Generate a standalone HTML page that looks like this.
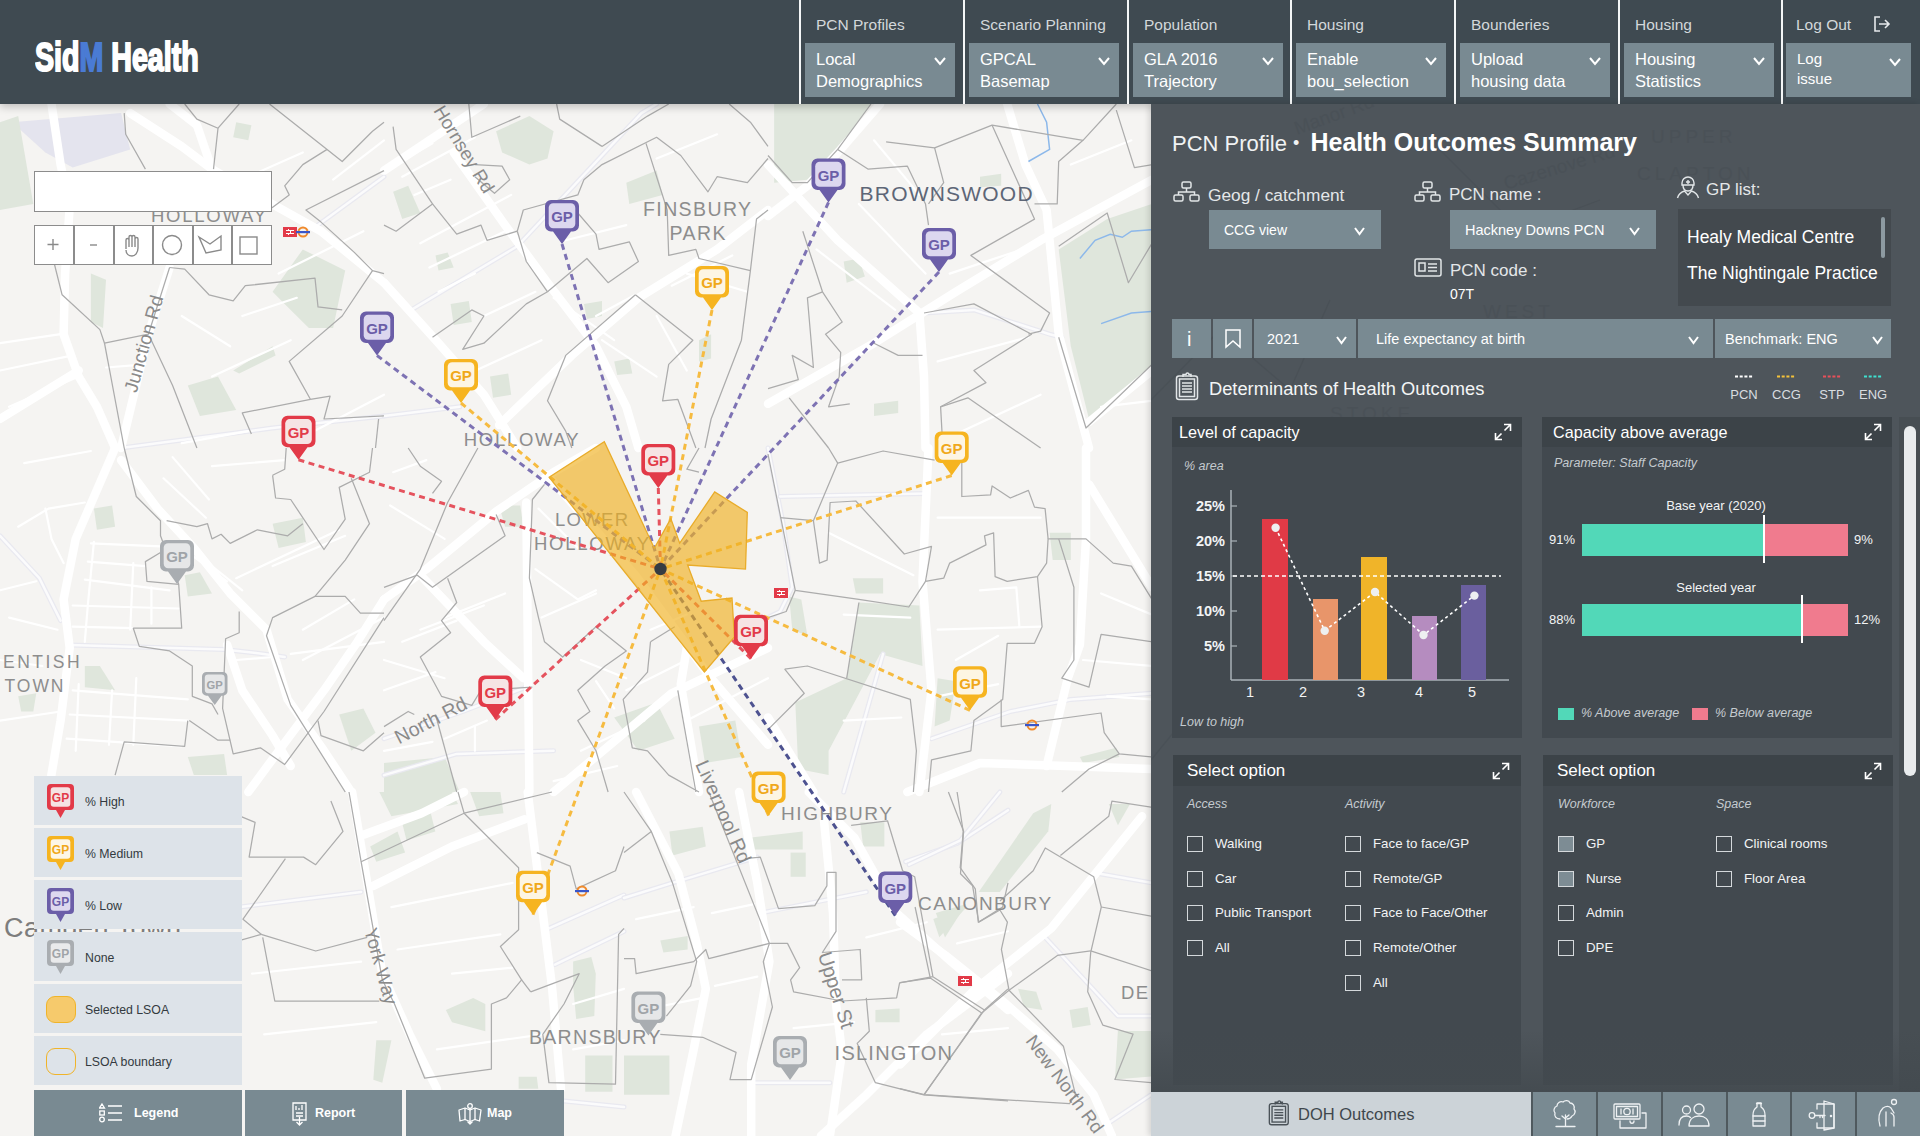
<!DOCTYPE html><html><head><meta charset="utf-8"><style>
*{margin:0;padding:0;box-sizing:border-box}
html,body{width:1920px;height:1136px;overflow:hidden;background:#f2f1ef;font-family:"Liberation Sans",sans-serif}
.a{position:absolute}
.t{position:absolute;white-space:nowrap}
#hdr{position:absolute;left:0;top:0;width:1920px;height:104px;background:#3f4a51;box-shadow:0 3px 8px rgba(0,0,0,.22)}
.logo{position:absolute;left:35px;top:37px;font-weight:bold;font-size:40px;line-height:40px;color:#fff;transform:scaleX(.715);transform-origin:0 0;white-space:nowrap;-webkit-text-stroke:2px #fff;letter-spacing:0px}
.logo span{color:#4a7bd4;-webkit-text-stroke:2px #4a7bd4}
.sep{position:absolute;top:0;width:2px;height:104px;background:#f4f6f7}
.nl{position:absolute;top:15px;font-size:15.5px;line-height:19px;color:#d3d8db;white-space:nowrap}
.dd{position:absolute;top:43px;height:54px;width:150px;background:#798a92;color:#fff;font-size:16.5px;line-height:22px;padding:5px 0 0 11px;white-space:nowrap}
#panel{position:absolute;left:1151px;top:104px;width:769px;height:1032px;background:#4e555b;box-shadow:-2px 0 6px rgba(0,0,0,.15)}
.box{position:absolute;background:#798a92}
.card{position:absolute;background:#42494f}
.ch{position:absolute;left:0;top:0;right:0;height:30px;background:#3c4348}
.cb{position:absolute;width:16px;height:16px;border:1.5px solid #d5d9dc}
.cl{position:absolute;font-size:13.3px;line-height:16px;color:#f2f4f5;white-space:nowrap}
.leg{position:absolute;left:34px;width:208px;height:49px;background:#dde3e9}
.legt{position:absolute;left:85px;font-size:12.3px;line-height:15px;color:#333a40;white-space:nowrap}
.btn{position:absolute;top:1090px;height:46px;background:#798a92}
</style></head><body>
<svg class="a" style="left:0;top:0" width="1151" height="1136" viewBox="0 0 1151 1136">
<rect width="1151" height="1136" fill="#f5f4f2"/>
<polygon points="12.1,122.2 121.1,113.1 130.2,149.4 72.7,167.6 45.4,152.5" fill="#e4e4ee"/>
<polygon points="0.0,122.2 18.2,116.1 33.3,203.9 0.0,210.0" fill="#dfe6dc"/>
<polygon points="272.6,291.8 302.8,249.4 345.2,270.6 333.1,328.1 308.9,328.1 284.7,303.9" fill="#dfe6dc"/>
<polygon points="187.8,385.6 218.0,376.6 236.2,409.9 199.9,415.9" fill="#dfe6dc"/>
<polygon points="233.2,370.5 272.6,346.3 275.6,355.4 239.2,373.5" fill="#dfe6dc"/>
<polygon points="90.9,273.6 106.0,279.7 103.0,328.1 90.9,322.0" fill="#dfe6dc"/>
<polygon points="236.2,122.2 251.4,125.2 248.3,140.3 233.2,137.3" fill="#dfe6dc"/>
<polygon points="496.1,131.3 529.4,116.1 553.6,131.3 547.5,158.5 529.4,164.6 502.1,152.5" fill="#dfe6dc"/>
<polygon points="393.1,191.8 408.2,185.8 420.3,213.0 402.2,219.1" fill="#dfe6dc"/>
<polygon points="435.5,255.4 447.6,252.4 453.7,267.5 438.5,270.6" fill="#dfe6dc"/>
<polygon points="450.6,303.9 468.8,300.9 471.8,322.0 453.7,325.1" fill="#dfe6dc"/>
<polygon points="490.0,376.6 508.2,373.5 511.2,394.7 493.0,397.8" fill="#dfe6dc"/>
<polygon points="583.9,303.9 602.0,300.9 602.0,316.0 586.9,319.0" fill="#dfe6dc"/>
<polygon points="614.2,361.4 629.3,358.4 632.3,373.5 617.2,375.0" fill="#dfe6dc"/>
<polygon points="626.3,182.7 656.6,170.6 662.6,194.9 629.3,203.9" fill="#dfe6dc"/>
<polygon points="699.0,340.2 711.1,334.2 711.1,358.4 699.0,361.4" fill="#dfe6dc"/>
<polygon points="774.1,104.0 871.0,104.0 837.7,149.4 807.4,179.7 774.1,182.7" fill="#dfe6dc"/>
<polygon points="1058.7,249.4 1107.2,219.1 1152.0,203.9 1152.0,367.5 1089.0,419.0 1070.8,346.3" fill="#dfe6dc"/>
<polygon points="980.0,176.7 1001.2,173.7 1001.2,185.8 980.0,187.3" fill="#dfe6dc"/>
<polygon points="843.7,261.5 858.9,258.5 864.9,276.6 846.7,282.7" fill="#dfe6dc"/>
<polygon points="874.0,403.8 898.2,400.8 898.2,412.9 874.0,415.9" fill="#dfe6dc"/>
<polygon points="184.7,575.2 199.9,572.2 212.0,593.4 187.8,596.4" fill="#dfe6dc"/>
<polygon points="93.9,508.6 112.1,505.5 115.1,526.7 96.9,529.8" fill="#dfe6dc"/>
<polygon points="84.8,666.0 99.9,666.0 115.1,690.3 84.8,687.2" fill="#dfe6dc"/>
<polygon points="272.6,523.7 302.8,517.7 305.9,541.9 278.6,547.9" fill="#dfe6dc"/>
<polygon points="339.2,714.5 363.4,708.4 375.5,732.7 351.3,750.8" fill="#dfe6dc"/>
<polygon points="187.8,756.9 224.1,753.9 227.1,775.1 193.8,775.1" fill="#dfe6dc"/>
<polygon points="18.2,696.3 36.3,693.3 33.3,711.5 21.2,711.5" fill="#dfe6dc"/>
<polygon points="614.2,717.5 656.6,702.4 674.7,738.7 638.4,750.8" fill="#dfe6dc"/>
<polygon points="699.0,726.6 735.3,720.6 741.4,756.9 705.0,763.0" fill="#dfe6dc"/>
<polygon points="384.0,763.0 444.6,756.9 459.7,792.0 384.0,792.0" fill="#dfe6dc"/>
<polygon points="499.1,505.5 520.3,505.5 523.3,526.7 505.1,526.7" fill="#dfe6dc"/>
<polygon points="795.3,702.4 846.7,678.2 858.9,602.5 919.4,605.5 922.5,666.0 880.1,653.9 828.6,750.8 828.6,775.1 798.3,769.0" fill="#dfe6dc"/>
<polygon points="789.2,596.4 801.3,599.4 807.4,635.8 792.2,629.7" fill="#dfe6dc"/>
<polygon points="937.6,678.2 955.8,681.2 949.7,720.6 934.6,726.6" fill="#dfe6dc"/>
<polygon points="852.8,578.2 883.1,578.2 883.1,593.4 855.8,593.4" fill="#dfe6dc"/>
<polygon points="1049.6,532.8 1070.8,532.8 1070.8,560.1 1052.7,560.1" fill="#dfe6dc"/>
<polygon points="1079.9,756.9 1116.3,747.8 1119.3,756.9 1083.0,763.0" fill="#dfe6dc"/>
<polygon points="370.2,846.5 397.5,831.4 405.1,852.6 376.3,861.7" fill="#dfe6dc"/>
<polygon points="402.0,822.3 430.8,813.2 435.3,831.4 406.6,840.5" fill="#dfe6dc"/>
<polygon points="379.3,792.0 452.0,792.0 458.0,804.1 391.4,816.2" fill="#dfe6dc"/>
<polygon points="470.2,792.0 500.4,792.0 503.5,813.2 479.2,816.2" fill="#dfe6dc"/>
<polygon points="445.9,1010.0 473.2,997.9 485.3,1004.0 485.3,1031.2 452.0,1022.2" fill="#dfe6dc"/>
<polygon points="573.1,961.6 591.3,957.1 595.8,973.7 594.3,1016.1 576.2,1019.1 573.1,985.8" fill="#dfe6dc"/>
<polygon points="585.2,1055.5 612.5,1055.5 612.5,1091.8 585.2,1091.8" fill="#dfe6dc"/>
<polygon points="518.6,1076.7 536.8,1076.7 538.3,1088.8 518.6,1088.8" fill="#dfe6dc"/>
<polygon points="376.3,1040.3 391.4,1040.3 382.3,1082.7 373.3,1079.7" fill="#dfe6dc"/>
<polygon points="669.4,831.4 702.7,826.8 705.8,846.5 672.5,855.6" fill="#dfe6dc"/>
<polygon points="751.2,837.4 802.7,831.4 802.7,849.5 754.2,849.5" fill="#dfe6dc"/>
<polygon points="660.3,940.4 687.6,935.9 687.6,949.5 663.4,952.5" fill="#dfe6dc"/>
<polygon points="624.0,1055.5 669.4,1055.5 669.4,1094.8 624.0,1094.8" fill="#dfe6dc"/>
<polygon points="875.4,1010.0 899.6,1008.5 899.6,1022.2 875.4,1022.2" fill="#dfe6dc"/>
<polygon points="860.2,822.3 884.4,822.3 884.4,846.5 863.2,846.5" fill="#dfe6dc"/>
<polygon points="935.9,913.1 966.2,904.1 945.0,937.4" fill="#dfe6dc"/>
<polygon points="790.6,852.6 805.7,852.6 805.7,876.8 790.6,876.8" fill="#dfe6dc"/>
<polygon points="978.7,891.9 1033.2,813.2 1051.3,804.1 1048.3,831.3 999.9,891.9" fill="#dfe6dc"/>
<polygon points="1018.0,988.7 1036.2,991.8 1042.3,1009.9 1024.1,1006.9" fill="#dfe6dc"/>
<polygon points="1069.5,1009.9 1087.7,1006.9 1090.7,1025.1 1072.5,1028.1" fill="#dfe6dc"/>
<polygon points="1117.9,1031.1 1151.2,1031.1 1151.2,1076.5 1114.9,1079.5" fill="#dfe6dc"/>
<polygon points="1108.8,804.1 1130.0,804.1 1117.9,825.3" fill="#dfe6dc"/>
<polygon points="933.3,919.1 966.6,907.0 939.3,937.3" fill="#dfe6dc"/>
<g fill="none" stroke-linecap="round" stroke-linejoin="round">
<polyline points="121.1,448.0 272.6,428.0 384.0,415.9" stroke="#e9e9f0" stroke-width="5"/>
<polyline points="121.1,448.0 272.6,428.0 384.0,415.9" stroke="#fbfbfc" stroke-width="2.5"/>
<polyline points="318.0,225.1 384.0,176.7" stroke="#e9e9f0" stroke-width="5"/>
<polyline points="318.0,225.1 384.0,176.7" stroke="#fbfbfc" stroke-width="2.5"/>
<polyline points="411.3,309.9 517.3,246.3 602.0,155.5 641.4,113.1 656.6,104.0" stroke="#e9e9f0" stroke-width="5"/>
<polyline points="411.3,309.9 517.3,246.3 602.0,155.5 641.4,113.1 656.6,104.0" stroke="#fbfbfc" stroke-width="2.5"/>
<polyline points="384.0,415.9 459.7,406.8" stroke="#e9e9f0" stroke-width="5"/>
<polyline points="384.0,415.9 459.7,406.8" stroke="#fbfbfc" stroke-width="2.5"/>
<polyline points="924.0,313.0 973.9,309.9 1049.6,334.2 1061.8,337.2" stroke="#e9e9f0" stroke-width="5"/>
<polyline points="924.0,313.0 973.9,309.9 1049.6,334.2 1061.8,337.2" stroke="#fbfbfc" stroke-width="2.5"/>
<polyline points="69.7,644.9 224.1,649.4 263.5,653.9 284.7,657.0" stroke="#e9e9f0" stroke-width="5"/>
<polyline points="69.7,644.9 224.1,649.4 263.5,653.9 284.7,657.0" stroke="#fbfbfc" stroke-width="2.5"/>
<polyline points="0.0,535.8 39.4,578.2 60.6,620.6" stroke="#e9e9f0" stroke-width="5"/>
<polyline points="0.0,535.8 39.4,578.2 60.6,620.6" stroke="#fbfbfc" stroke-width="2.5"/>
<polyline points="384.0,738.7 462.7,711.5 526.3,687.2" stroke="#e9e9f0" stroke-width="5"/>
<polyline points="384.0,738.7 462.7,711.5 526.3,687.2" stroke="#fbfbfc" stroke-width="2.5"/>
<polyline points="384.0,775.1 456.7,753.9 553.6,750.8" stroke="#e9e9f0" stroke-width="5"/>
<polyline points="384.0,775.1 456.7,753.9 553.6,750.8" stroke="#fbfbfc" stroke-width="2.5"/>
<polyline points="768.0,448.0 783.1,523.7 792.2,587.3 780.1,611.5 768.0,617.6" stroke="#e9e9f0" stroke-width="5"/>
<polyline points="768.0,448.0 783.1,523.7 792.2,587.3 780.1,611.5 768.0,617.6" stroke="#fbfbfc" stroke-width="2.5"/>
<polyline points="931.5,738.7 1010.3,711.5 1070.8,699.4 1152.0,693.3" stroke="#e9e9f0" stroke-width="5"/>
<polyline points="931.5,738.7 1010.3,711.5 1070.8,699.4 1152.0,693.3" stroke="#fbfbfc" stroke-width="2.5"/>
<polyline points="780.1,496.5 925.5,493.4" stroke="#e9e9f0" stroke-width="5"/>
<polyline points="780.1,496.5 925.5,493.4" stroke="#fbfbfc" stroke-width="2.5"/>
<polyline points="883.1,653.9 843.7,792.0" stroke="#e9e9f0" stroke-width="5"/>
<polyline points="883.1,653.9 843.7,792.0" stroke="#fbfbfc" stroke-width="2.5"/>
<polyline points="240.0,907.1 361.1,891.9" stroke="#e9e9f0" stroke-width="5"/>
<polyline points="240.0,907.1 361.1,891.9" stroke="#fbfbfc" stroke-width="2.5"/>
<polyline points="548.9,928.3 624.0,895.0" stroke="#e9e9f0" stroke-width="5"/>
<polyline points="548.9,928.3 624.0,895.0" stroke="#fbfbfc" stroke-width="2.5"/>
<polyline points="555.0,964.6 624.0,931.3" stroke="#e9e9f0" stroke-width="5"/>
<polyline points="555.0,964.6 624.0,931.3" stroke="#fbfbfc" stroke-width="2.5"/>
<polyline points="564.0,1100.9 624.0,1107.0" stroke="#e9e9f0" stroke-width="5"/>
<polyline points="564.0,1100.9 624.0,1107.0" stroke="#fbfbfc" stroke-width="2.5"/>
<polyline points="624.0,898.0 672.5,882.9 757.3,857.1" stroke="#e9e9f0" stroke-width="5"/>
<polyline points="624.0,898.0 672.5,882.9 757.3,857.1" stroke="#fbfbfc" stroke-width="2.5"/>
<polyline points="760.3,913.1 866.3,891.9" stroke="#e9e9f0" stroke-width="5"/>
<polyline points="760.3,913.1 866.3,891.9" stroke="#fbfbfc" stroke-width="2.5"/>
<polyline points="905.6,861.7 957.1,843.5 1008.0,810.2" stroke="#e9e9f0" stroke-width="5"/>
<polyline points="905.6,861.7 957.1,843.5 1008.0,810.2" stroke="#fbfbfc" stroke-width="2.5"/>
<polyline points="751.2,1082.7 829.9,1082.7" stroke="#e9e9f0" stroke-width="5"/>
<polyline points="751.2,1082.7 829.9,1082.7" stroke="#fbfbfc" stroke-width="2.5"/>
<polyline points="1042.3,934.3 1117.9,1016.0 1151.2,1016.0" stroke="#e9e9f0" stroke-width="5"/>
<polyline points="1042.3,934.3 1117.9,1016.0 1151.2,1016.0" stroke="#fbfbfc" stroke-width="2.5"/>
<polyline points="1099.8,873.7 1151.2,882.8" stroke="#e9e9f0" stroke-width="5"/>
<polyline points="1099.8,873.7 1151.2,882.8" stroke="#fbfbfc" stroke-width="2.5"/>
<polyline points="909.1,864.6 960.5,840.4 999.9,792.0" stroke="#e9e9f0" stroke-width="5"/>
<polyline points="909.1,864.6 960.5,840.4 999.9,792.0" stroke="#fbfbfc" stroke-width="2.5"/>
<polyline points="1105.8,1124.9 1151.2,1094.7" stroke="#e9e9f0" stroke-width="5"/>
<polyline points="1105.8,1124.9 1151.2,1094.7" stroke="#fbfbfc" stroke-width="2.5"/>
<polyline points="90.9,543.4 160.5,546.4" stroke="#fff" stroke-width="2.2"/>
<polyline points="87.8,561.6 145.4,566.1" stroke="#fff" stroke-width="2.2"/>
<polyline points="84.8,579.7 169.6,590.3" stroke="#fff" stroke-width="2.2"/>
<polyline points="72.7,605.5 178.7,608.5" stroke="#fff" stroke-width="2.2"/>
<polyline points="72.7,626.7 133.3,628.2" stroke="#fff" stroke-width="2.2"/>
<polyline points="93.9,541.9 87.8,605.5 84.8,641.8" stroke="#fff" stroke-width="2.2"/>
<polyline points="133.3,563.1 130.2,629.7" stroke="#fff" stroke-width="2.2"/>
<polyline points="151.4,587.3 151.4,623.7" stroke="#fff" stroke-width="2.2"/>
<polyline points="212.0,466.2 284.7,460.1" stroke="#fff" stroke-width="2.2"/>
<polyline points="172.6,457.1 209.0,499.5" stroke="#fff" stroke-width="2.2"/>
<polyline points="163.5,478.3 205.9,517.7" stroke="#fff" stroke-width="2.2"/>
<polyline points="24.2,463.1 90.9,451.0" stroke="#fff" stroke-width="2.2"/>
<polyline points="18.2,526.7 48.5,508.6 84.8,502.5" stroke="#fff" stroke-width="2.2"/>
<polyline points="45.4,508.6 51.5,538.9 63.6,563.1" stroke="#fff" stroke-width="2.2"/>
<polyline points="181.7,547.9 227.1,581.3" stroke="#fff" stroke-width="2.2"/>
<polyline points="196.9,554.0 242.3,590.3" stroke="#fff" stroke-width="2.2"/>
<polyline points="236.2,578.2 339.2,529.8" stroke="#fff" stroke-width="2.2"/>
<polyline points="272.6,566.1 345.2,535.8" stroke="#fff" stroke-width="2.2"/>
<polyline points="302.8,629.7 354.3,599.4" stroke="#fff" stroke-width="2.2"/>
<polyline points="302.8,660.0 384.0,617.6" stroke="#fff" stroke-width="2.2"/>
<polyline points="72.7,690.3 187.8,699.4" stroke="#fff" stroke-width="2.2"/>
<polyline points="69.7,714.5 187.8,720.6" stroke="#fff" stroke-width="2.2"/>
<polyline points="66.6,738.7 181.7,746.3" stroke="#fff" stroke-width="2.2"/>
<polyline points="78.7,684.2 75.7,750.8" stroke="#fff" stroke-width="2.2"/>
<polyline points="112.1,690.3 109.0,744.8" stroke="#fff" stroke-width="2.2"/>
<polyline points="136.3,678.2 133.3,744.8" stroke="#fff" stroke-width="2.2"/>
<polyline points="0.0,720.6 60.6,711.5" stroke="#fff" stroke-width="2.2"/>
<polyline points="290.7,653.9 384.0,641.8" stroke="#fff" stroke-width="2.2"/>
<polyline points="236.2,660.0 272.6,657.0" stroke="#fff" stroke-width="2.2"/>
<polyline points="0.0,590.3 36.3,581.3" stroke="#fff" stroke-width="2.2"/>
<polyline points="9.1,617.6 57.5,629.7" stroke="#fff" stroke-width="2.2"/>
<polyline points="0.0,660.0 42.4,666.0" stroke="#fff" stroke-width="2.2"/>
<polyline points="393.1,472.2 426.4,460.1" stroke="#fff" stroke-width="2.2"/>
<polyline points="390.1,505.5 444.6,538.9" stroke="#fff" stroke-width="2.2"/>
<polyline points="538.5,508.6 577.8,547.9" stroke="#fff" stroke-width="2.2"/>
<polyline points="535.4,569.1 577.8,599.4 596.0,590.3" stroke="#fff" stroke-width="2.2"/>
<polyline points="541.5,617.6 596.0,593.4" stroke="#fff" stroke-width="2.2"/>
<polyline points="444.6,617.6 505.1,593.4" stroke="#fff" stroke-width="2.2"/>
<polyline points="420.3,629.7 483.9,605.5" stroke="#fff" stroke-width="2.2"/>
<polyline points="402.2,641.8 456.7,620.6" stroke="#fff" stroke-width="2.2"/>
<polyline points="384.0,660.0 444.6,678.2" stroke="#fff" stroke-width="2.2"/>
<polyline points="384.0,690.3 435.5,672.1" stroke="#fff" stroke-width="2.2"/>
<polyline points="444.6,738.7 487.0,720.6" stroke="#fff" stroke-width="2.2"/>
<polyline points="474.9,726.6 474.9,750.8" stroke="#fff" stroke-width="2.2"/>
<polyline points="580.9,660.0 626.3,678.2" stroke="#fff" stroke-width="2.2"/>
<polyline points="596.0,681.2 614.2,708.4" stroke="#fff" stroke-width="2.2"/>
<polyline points="626.3,690.3 686.8,660.0" stroke="#fff" stroke-width="2.2"/>
<polyline points="650.5,629.7 686.8,614.6" stroke="#fff" stroke-width="2.2"/>
<polyline points="686.8,720.6 768.0,678.2" stroke="#fff" stroke-width="2.2"/>
<polyline points="580.9,750.8 644.4,720.6" stroke="#fff" stroke-width="2.2"/>
<polyline points="384.0,750.8 432.5,741.8" stroke="#fff" stroke-width="2.2"/>
<polyline points="553.6,781.1 617.2,766.0" stroke="#fff" stroke-width="2.2"/>
<polyline points="396.1,164.6 432.5,143.4" stroke="#fff" stroke-width="2.2"/>
<polyline points="402.2,176.7 474.9,137.3" stroke="#fff" stroke-width="2.2"/>
<polyline points="414.3,194.9 450.6,179.7" stroke="#fff" stroke-width="2.2"/>
<polyline points="420.3,243.3 511.2,194.9" stroke="#fff" stroke-width="2.2"/>
<polyline points="429.4,267.5 505.1,231.2" stroke="#fff" stroke-width="2.2"/>
<polyline points="438.5,291.8 474.9,273.6" stroke="#fff" stroke-width="2.2"/>
<polyline points="462.7,376.6 541.5,340.2" stroke="#fff" stroke-width="2.2"/>
<polyline points="483.9,316.0 535.4,291.8" stroke="#fff" stroke-width="2.2"/>
<polyline points="553.6,297.8 614.2,340.2" stroke="#fff" stroke-width="2.2"/>
<polyline points="565.7,240.3 626.3,225.1" stroke="#fff" stroke-width="2.2"/>
<polyline points="596.0,316.0 635.4,294.8" stroke="#fff" stroke-width="2.2"/>
<polyline points="602.0,340.2 656.6,376.6" stroke="#fff" stroke-width="2.2"/>
<polyline points="656.6,158.5 717.1,134.3" stroke="#fff" stroke-width="2.2"/>
<polyline points="671.7,285.7 732.3,255.4" stroke="#fff" stroke-width="2.2"/>
<polyline points="656.6,316.0 686.8,370.5" stroke="#fff" stroke-width="2.2"/>
<polyline points="686.8,273.6 747.4,291.8" stroke="#fff" stroke-width="2.2"/>
<polyline points="828.6,532.8 913.4,575.2" stroke="#fff" stroke-width="2.2"/>
<polyline points="843.7,614.6 910.3,617.6" stroke="#fff" stroke-width="2.2"/>
<polyline points="937.6,517.7 1040.6,517.7" stroke="#fff" stroke-width="2.2"/>
<polyline points="937.6,629.7 1040.6,626.7" stroke="#fff" stroke-width="2.2"/>
<polyline points="980.0,590.3 1016.3,587.3 1019.4,626.7" stroke="#fff" stroke-width="2.2"/>
<polyline points="955.8,660.0 998.2,635.8" stroke="#fff" stroke-width="2.2"/>
<polyline points="1101.1,593.4 1152.0,614.6" stroke="#fff" stroke-width="2.2"/>
<polyline points="1083.0,660.0 1152.0,666.0" stroke="#fff" stroke-width="2.2"/>
<polyline points="937.6,696.3 998.2,684.2" stroke="#fff" stroke-width="2.2"/>
<polyline points="843.7,720.6 901.3,717.5" stroke="#fff" stroke-width="2.2"/>
<polyline points="1107.2,696.3 1152.0,699.4" stroke="#fff" stroke-width="2.2"/>
<polyline points="0.0,343.2 60.6,334.2" stroke="#fff" stroke-width="2.2"/>
<polyline points="0.0,370.5 72.7,355.4" stroke="#fff" stroke-width="2.2"/>
<polyline points="9.1,406.8 78.7,376.6" stroke="#fff" stroke-width="2.2"/>
<polyline points="181.7,316.0 230.2,346.3" stroke="#fff" stroke-width="2.2"/>
<polyline points="242.3,316.0 296.8,297.8" stroke="#fff" stroke-width="2.2"/>
<polyline points="302.8,437.1 384.0,394.7" stroke="#fff" stroke-width="2.2"/>
<polyline points="212.0,376.6 290.7,340.2" stroke="#fff" stroke-width="2.2"/>
<polyline points="278.6,273.6 363.4,231.2" stroke="#fff" stroke-width="2.2"/>
<polyline points="248.3,176.7 302.8,152.5" stroke="#fff" stroke-width="2.2"/>
<polyline points="333.1,179.7 384.0,140.3" stroke="#fff" stroke-width="2.2"/>
<polyline points="106.0,367.5 145.4,364.4" stroke="#fff" stroke-width="2.2"/>
<polyline points="181.7,443.2 248.3,431.1" stroke="#fff" stroke-width="2.2"/>
<polyline points="858.9,203.9 925.5,273.6" stroke="#fff" stroke-width="2.2"/>
<polyline points="816.5,249.4 895.2,309.9" stroke="#fff" stroke-width="2.2"/>
<polyline points="949.7,273.6 1040.6,243.3" stroke="#fff" stroke-width="2.2"/>
<polyline points="937.6,361.4 1028.4,337.2" stroke="#fff" stroke-width="2.2"/>
<polyline points="949.7,437.1 1040.6,394.7" stroke="#fff" stroke-width="2.2"/>
<polyline points="874.0,140.3 919.4,194.9" stroke="#fff" stroke-width="2.2"/>
<polyline points="1070.8,164.6 1131.4,140.3" stroke="#fff" stroke-width="2.2"/>
<polyline points="1101.1,406.8 1152.0,400.8" stroke="#fff" stroke-width="2.2"/>
<polyline points="252.1,973.7 361.1,961.6" stroke="#fff" stroke-width="2.2"/>
<polyline points="264.2,1034.3 376.3,1022.2" stroke="#fff" stroke-width="2.2"/>
<polyline points="391.4,907.1 512.6,882.9" stroke="#fff" stroke-width="2.2"/>
<polyline points="397.5,949.5 500.4,934.3" stroke="#fff" stroke-width="2.2"/>
<polyline points="452.0,973.7 512.6,967.7" stroke="#fff" stroke-width="2.2"/>
<polyline points="436.9,1049.4 542.8,1034.3" stroke="#fff" stroke-width="2.2"/>
<polyline points="573.1,1004.0 624.0,988.9" stroke="#fff" stroke-width="2.2"/>
<polyline points="573.1,1049.4 624.0,1040.3" stroke="#fff" stroke-width="2.2"/>
<polyline points="636.1,919.2 693.7,907.1" stroke="#fff" stroke-width="2.2"/>
<polyline points="642.2,1010.0 702.7,997.9" stroke="#fff" stroke-width="2.2"/>
<polyline points="711.8,913.1 754.2,904.1" stroke="#fff" stroke-width="2.2"/>
<polyline points="714.9,985.8 757.3,976.7" stroke="#fff" stroke-width="2.2"/>
<polyline points="793.6,1028.2 854.2,1022.2" stroke="#fff" stroke-width="2.2"/>
<polyline points="866.3,937.4 926.8,922.2" stroke="#fff" stroke-width="2.2"/>
<polyline points="881.4,1049.4 926.8,1046.4" stroke="#fff" stroke-width="2.2"/>
<polyline points="957.1,943.4 1008.0,931.3" stroke="#fff" stroke-width="2.2"/>
<polyline points="942.0,1034.3 1008.0,1028.2" stroke="#fff" stroke-width="2.2"/>
<polyline points="130.2,113.1 181.7,146.4 212.0,169.1 266.5,200.9 321.0,231.2 384.0,282.7" stroke="#fff" stroke-width="8.5"/>
<polyline points="169.6,104.0 196.9,125.2 212.0,169.1" stroke="#fff" stroke-width="8.5"/>
<polyline points="169.6,267.5 148.4,334.2 121.1,448.0" stroke="#fff" stroke-width="8.5"/>
<polyline points="51.5,104.0 60.6,164.6 69.7,207.0 65.1,273.6 63.6,334.2 78.7,376.6 96.9,406.8 115.1,448.0" stroke="#fff" stroke-width="8.5"/>
<polyline points="0.0,419.0 78.7,370.5" stroke="#fff" stroke-width="8.5"/>
<polyline points="384.0,282.7 438.5,343.2 483.9,394.7 517.3,448.0" stroke="#fff" stroke-width="8.5"/>
<polyline points="453.7,152.5 505.1,225.1 547.5,282.7 596.0,346.3 626.3,406.8 638.4,448.0" stroke="#fff" stroke-width="8.5"/>
<polyline points="384.0,170.6 438.5,134.3 483.9,104.0" stroke="#fff" stroke-width="8.5"/>
<polyline points="499.1,425.0 571.8,355.4 638.4,297.8 717.1,249.4 768.0,210.0" stroke="#fff" stroke-width="8.5"/>
<polyline points="768.0,164.6 837.7,240.3 919.4,313.0 924.0,376.6 925.5,448.0" stroke="#fff" stroke-width="8.5"/>
<polyline points="768.0,216.1 807.4,185.8 840.7,149.4 880.1,104.0" stroke="#fff" stroke-width="8.5"/>
<polyline points="1007.2,104.0 1025.4,164.6 1046.6,210.0 1058.7,334.2 1089.0,448.0" stroke="#fff" stroke-width="8.5"/>
<polyline points="768.0,403.8 874.0,343.2 955.8,291.8 1040.6,240.3 1152.0,179.7" stroke="#fff" stroke-width="8.5"/>
<polyline points="1089.0,422.0 1152.0,370.5" stroke="#fff" stroke-width="8.5"/>
<polyline points="115.1,448.0 75.7,538.9 63.6,599.4 69.7,647.9 60.6,720.6 48.5,792.0" stroke="#fff" stroke-width="8.5"/>
<polyline points="121.1,460.1 157.5,508.6 193.8,547.9 230.2,593.4 266.5,629.7 287.7,699.4 324.0,750.8 351.3,792.0" stroke="#fff" stroke-width="8.5"/>
<polyline points="227.1,644.9 242.3,690.3 272.6,735.7 290.7,766.0" stroke="#fff" stroke-width="8.5"/>
<polyline points="384.0,599.4 357.4,641.8 324.0,690.3 287.7,738.7 248.3,792.0" stroke="#fff" stroke-width="8.5"/>
<polyline points="384.0,599.4 426.4,569.1 496.1,511.6 553.6,472.2 596.0,448.0" stroke="#fff" stroke-width="8.5"/>
<polyline points="423.4,578.2 483.9,641.8 523.3,678.2" stroke="#fff" stroke-width="8.5"/>
<polyline points="526.3,502.5 529.4,792.0" stroke="#fff" stroke-width="8.5"/>
<polyline points="547.5,475.3 635.4,575.2 711.1,678.2 768.0,744.8" stroke="#fff" stroke-width="8.5"/>
<polyline points="686.8,647.9 680.8,684.2 699.0,792.0" stroke="#fff" stroke-width="8.5"/>
<polyline points="553.6,792.0 671.7,693.3 768.0,647.9" stroke="#fff" stroke-width="8.5"/>
<polyline points="928.5,448.0 922.5,581.3 931.5,690.3 919.4,792.0" stroke="#fff" stroke-width="8.5"/>
<polyline points="1086.0,448.0 1086.0,538.9 1079.9,644.9 1067.8,678.2 1046.6,766.0" stroke="#fff" stroke-width="8.5"/>
<polyline points="1089.0,484.3 1152.0,587.3" stroke="#fff" stroke-width="8.5"/>
<polyline points="907.3,792.0 980.0,763.0 1152.0,769.0" stroke="#fff" stroke-width="8.5"/>
<polyline points="768.0,717.5 813.4,792.0" stroke="#fff" stroke-width="8.5"/>
<polyline points="352.1,792.0 367.2,882.9 382.3,973.7 409.6,1034.3 436.9,1088.8" stroke="#fff" stroke-width="8.5"/>
<polyline points="527.7,792.0 542.8,913.1 551.9,985.8 561.0,1088.8" stroke="#fff" stroke-width="8.5"/>
<polyline points="364.2,834.4 421.7,813.2 464.1,792.0" stroke="#fff" stroke-width="8.5"/>
<polyline points="373.3,885.9 452.0,846.5 524.7,819.3" stroke="#fff" stroke-width="8.5"/>
<polyline points="636.1,792.0 678.5,873.8 696.7,943.4 705.8,988.9 693.7,1049.4 675.5,1136.0" stroke="#fff" stroke-width="8.5"/>
<polyline points="739.1,792.0 757.3,882.9 769.4,961.6 751.2,1064.6 751.2,1136.0" stroke="#fff" stroke-width="8.5"/>
<polyline points="823.9,819.3 833.0,913.1 836.0,1004.0 842.0,1052.4 829.9,1136.0" stroke="#fff" stroke-width="8.5"/>
<polyline points="808.7,792.0 854.2,837.4 896.6,913.1 951.1,961.6 1008.0,1010.0" stroke="#fff" stroke-width="8.5"/>
<polyline points="1008.0,973.7 926.8,1034.3 866.3,1094.8 820.9,1136.0" stroke="#fff" stroke-width="8.5"/>
<polyline points="900.0,922.1 945.4,955.4 1005.9,1003.9 1057.4,1049.3 1093.7,1094.7 1111.9,1135.8" stroke="#fff" stroke-width="8.5"/>
<polyline points="900.0,1064.4 975.7,988.7 1051.3,928.2 1142.1,816.2" stroke="#fff" stroke-width="8.5"/>
</g>
<g fill="none" stroke="#8cb8ea" stroke-width="1.5">
<polyline points="1037.5,104.0 1046.6,122.2 1049.6,149.4 1028.4,161.5"/>
<polyline points="1079.9,258.5 1095.1,240.3 1110.2,234.2 1122.3,237.3 1131.4,231.2 1152.0,229.7"/>
<polyline points="1101.1,323.6 1131.4,313.0 1152.0,311.5"/>
</g>
<g fill="none" stroke="#acacac" stroke-width="1.25" stroke-linejoin="round">
<polyline points="124.2,113.1 125.7,134.3 145.4,169.1"/>
<polyline points="184.7,104.0 196.9,119.1 218.0,128.2 213.5,169.1"/>
<polyline points="218.0,128.2 239.2,104.0"/>
<polyline points="269.5,104.0 327.1,149.4 302.8,164.6 284.7,185.8 289.2,194.9 271.0,208.5"/>
<polyline points="327.1,149.4 342.2,161.5 372.5,131.3 384.0,122.2"/>
<polyline points="384.0,170.6 305.9,210.0 321.0,222.1 354.3,252.4 372.5,270.6 384.0,273.6"/>
<polyline points="169.6,267.5 184.7,269.1 209.0,294.8 233.2,300.9 245.3,285.7 315.0,278.1 318.0,306.9 342.2,309.9"/>
<polyline points="54.5,264.5 62.1,294.8 99.9,329.6 104.5,343.2 148.4,334.2 169.6,267.5"/>
<polyline points="104.5,343.2 124.2,448.0"/>
<polyline points="149.9,337.2 172.6,385.6 196.9,448.0"/>
<polyline points="372.5,270.6 342.2,316.0 289.2,361.4 310.4,399.3 242.3,412.9 251.4,434.1"/>
<polyline points="310.4,399.3 330.1,396.2 324.0,419.0 384.0,415.9"/>
<polyline points="378.6,419.0 375.5,448.0"/>
<polyline points="393.1,126.7 396.1,149.4 432.5,203.9 396.1,231.2 384.0,225.1"/>
<polyline points="432.5,203.9 456.7,234.2 480.9,225.1 487.0,240.3 517.3,231.2"/>
<polyline points="468.8,104.0 471.8,137.3 520.3,116.1"/>
<polyline points="517.3,231.2 523.3,210.0 577.8,194.9 583.9,179.7 602.0,164.6 656.6,137.3 680.8,155.5 708.0,191.8 717.1,176.7 747.4,182.7 768.0,158.5"/>
<polyline points="474.9,164.6 502.1,166.1 509.7,179.7 494.5,193.3 474.9,176.7"/>
<polyline points="556.6,104.0 559.7,119.1 602.0,146.4"/>
<polyline points="602.0,146.4 647.5,116.1 668.7,104.0"/>
<polyline points="517.3,231.2 526.3,261.5 547.5,291.8 526.3,303.9 483.9,343.2 462.7,349.3 483.9,316.0 471.8,309.9 432.5,337.2"/>
<polyline points="547.5,291.8 586.9,258.5 608.1,282.7 638.4,261.5 629.3,241.8 599.0,249.4 596.0,234.2 577.8,213.0"/>
<polyline points="646.0,143.4 667.2,210.0 668.7,255.4 695.9,249.4 699.0,258.5 750.4,270.6"/>
<polyline points="635.4,294.8 692.9,340.2 668.7,364.4 662.6,400.8 677.8,399.3 695.9,448.0"/>
<polyline points="635.4,294.8 565.7,355.4 547.5,400.8 565.7,431.1 571.8,448.0"/>
<polyline points="768.0,210.0 756.5,219.1 750.4,270.6 741.4,340.2 711.1,419.0 705.0,448.0"/>
<polyline points="729.2,104.0 750.4,122.2 768.0,146.4"/>
<polyline points="768.0,155.5 792.2,182.7 807.4,182.7 837.7,149.4 871.0,104.0"/>
<polyline points="837.7,149.4 867.9,169.1 907.3,166.1 925.5,203.9 928.5,225.1"/>
<polyline points="886.1,141.9 934.6,147.9 992.1,125.2 1083.0,140.3 1116.3,104.0"/>
<polyline points="934.6,147.9 943.7,182.7 928.5,203.9"/>
<polyline points="992.1,125.2 1034.5,219.1 970.9,255.4 1049.6,313.0 1040.6,331.1 1028.4,334.2"/>
<polyline points="1083.0,140.3 1058.7,161.5 1057.2,203.9 1034.5,203.9"/>
<polyline points="1116.3,110.1 1134.4,167.6 1152.0,164.6"/>
<polyline points="1058.7,246.3 1107.2,213.0 1128.4,282.7 1152.0,243.3"/>
<polyline points="802.8,231.2 822.5,291.8 842.2,322.0 825.5,334.2 840.7,352.3 839.2,376.6 828.6,406.8 849.8,403.8"/>
<polyline points="822.5,291.8 807.4,297.8 813.4,367.5 792.2,355.4 798.3,379.6 768.0,388.7"/>
<polyline points="874.0,343.2 898.2,355.4 922.5,355.4"/>
<polyline points="924.0,313.0 973.9,303.9 1031.5,334.2 973.9,370.5 986.0,382.6 940.6,406.8 942.1,434.1"/>
<polyline points="940.6,406.8 967.9,397.8 1040.6,448.0"/>
<polyline points="789.2,397.8 828.6,448.0"/>
<polyline points="1058.7,337.2 1086.0,428.0 1152.0,364.4"/>
<polyline points="124.2,448.0 136.3,496.5 160.5,520.7 160.5,535.8 178.7,584.3 181.7,628.2 133.3,628.2 139.3,646.4 169.6,650.9 192.3,666.0 192.3,696.3 212.0,703.9 218.0,714.5"/>
<polyline points="160.5,552.5 145.4,561.6 146.9,581.3 178.7,584.3"/>
<polyline points="166.6,520.7 196.9,526.7 207.5,523.7 212.0,538.9 221.1,534.3 230.2,543.4 257.4,529.8 287.7,535.8 302.8,523.7"/>
<polyline points="272.6,475.3 284.7,469.2 286.2,448.0"/>
<polyline points="272.6,475.3 275.6,498.0 290.7,499.5 324.0,549.5 345.2,519.2 339.2,487.4 369.5,472.2 372.5,448.0"/>
<polyline points="351.3,478.3 369.5,523.7 345.2,560.1 315.0,596.4 272.6,617.6 266.5,635.8 290.7,705.4 345.2,792.0"/>
<polyline points="315.0,596.4 345.2,596.4 360.4,613.1 384.0,613.1"/>
<polyline points="239.2,611.5 239.2,632.7 225.6,638.8 222.6,708.4 233.2,753.9 260.4,747.8 284.7,764.5 324.0,711.5 384.0,617.6"/>
<polyline points="189.3,720.6 218.0,740.2 230.2,740.2"/>
<polyline points="187.8,720.6 184.7,746.3 124.2,741.8 115.1,775.1"/>
<polyline points="318.0,720.6 321.0,735.7 363.4,750.8 384.0,732.7"/>
<polyline points="408.2,448.0 420.3,466.2 441.5,481.3 432.5,493.4"/>
<polyline points="477.9,448.0 447.6,502.5 420.3,569.1 384.0,620.6"/>
<polyline points="496.1,514.6 505.1,535.8 432.5,587.3 417.3,575.2 384.0,587.3"/>
<polyline points="544.5,484.3 532.4,499.5 529.4,578.2 538.5,617.6 544.5,641.8 562.7,657.0 596.0,626.7 626.3,650.9 605.1,666.0 577.8,690.3 589.9,711.5 577.8,720.6 596.0,750.8 608.1,792.0"/>
<polyline points="447.6,578.2 456.7,602.5 441.5,620.6 450.6,632.7 420.3,657.0 441.5,696.3 471.8,705.4 480.9,690.3 532.4,687.2"/>
<polyline points="384.0,726.6 408.2,711.5 414.3,714.5"/>
<polyline points="435.5,714.5 456.7,792.0"/>
<polyline points="650.5,641.8 647.5,672.1 623.2,699.4 632.3,747.8 647.5,750.8 668.7,775.1 699.0,792.0"/>
<polyline points="650.5,641.8 674.7,626.7"/>
<polyline points="699.0,448.0 686.8,469.2 699.0,472.2"/>
<polyline points="677.8,690.3 695.9,792.0"/>
<polyline points="828.6,448.0 837.7,463.1 883.1,451.0 934.6,460.1"/>
<polyline points="837.7,463.1 813.4,520.7 819.5,563.1 827.1,560.1 830.1,502.5 855.8,501.0 904.3,554.0 931.5,546.4 925.5,581.3 943.7,578.2 949.7,563.1 986.0,544.9 984.5,535.8 993.6,532.8 995.1,576.7 1007.2,581.3 1037.5,576.7 1046.6,563.1 1048.1,538.9 1086.0,538.9 1113.2,563.1 1131.4,566.1 1152.0,599.4"/>
<polyline points="780.1,517.7 813.4,520.7"/>
<polyline points="768.0,454.1 795.3,590.3 858.9,599.4 908.8,607.0 925.5,581.3"/>
<polyline points="795.3,590.3 786.2,611.5 768.0,617.6"/>
<polyline points="961.8,457.1 961.8,496.5 990.6,494.9 992.1,485.9 1010.3,498.0 1028.4,490.4 1034.5,507.1 1045.1,508.6 1048.1,538.9"/>
<polyline points="1037.5,576.7 1042.1,626.7 1034.5,643.3 1007.2,643.3 1002.7,699.4 973.9,720.6 970.9,750.8 931.5,759.9 928.5,792.0"/>
<polyline points="858.9,602.5 846.7,678.2"/>
<polyline points="784.7,669.1 804.3,693.3 768.0,729.6"/>
<polyline points="784.7,669.1 807.4,666.0 910.3,699.4 916.4,750.8 913.4,792.0"/>
<polyline points="1001.2,699.4 1001.2,726.6 1101.1,713.0 1104.2,732.7 1119.3,753.9 1152.0,756.9"/>
<polyline points="1058.7,538.9 1073.9,587.3 1073.9,660.0 1061.8,678.2 1089.0,687.2 1101.1,634.3 1152.0,641.8"/>
<polyline points="1119.3,753.9 1089.0,769.0 1061.8,792.0"/>
<polyline points="330.9,801.1 343.0,831.4 315.7,864.7 303.6,857.1 249.1,857.1 255.1,822.3 240.0,816.2"/>
<polyline points="285.4,858.6 243.0,919.2 261.2,934.3 240.0,940.4"/>
<polyline points="261.2,934.3 315.7,951.0 367.2,937.4"/>
<polyline points="262.7,937.4 274.8,1001.0 379.3,1001.0"/>
<polyline points="349.0,792.0 361.1,861.7 382.3,979.8 394.5,1004.0 424.7,1078.2 491.4,1069.1 491.4,1004.0 506.5,997.9 521.6,979.8 500.4,946.5 518.6,929.8 518.6,867.7 464.1,813.2 458.0,792.0"/>
<polyline points="361.1,861.7 464.1,813.2 551.9,792.0"/>
<polyline points="536.8,852.6 570.1,866.2 576.2,888.9 615.5,870.7 624.0,846.5"/>
<polyline points="530.7,991.9 579.2,973.7 564.0,1004.0 542.8,1034.3 548.9,1082.7 615.5,1084.2 618.6,934.3 624.0,928.3"/>
<polyline points="521.6,979.8 530.7,991.9"/>
<polyline points="624.0,792.0 651.3,831.4 672.5,882.9 696.7,961.6 690.6,985.8 666.4,1016.1"/>
<polyline points="624.0,852.6 651.3,831.4"/>
<polyline points="708.8,792.0 769.4,943.4 763.3,961.6 772.4,1007.0 751.2,1079.7 730.0,1079.7 736.1,1052.4 702.7,1037.3 660.3,1034.3"/>
<polyline points="624.0,958.6 634.6,958.6 636.1,973.7 693.7,961.6 705.8,949.5 708.8,958.6 769.4,943.4 787.5,943.4 799.7,967.7 790.6,979.8 793.6,991.9 842.0,1001.0 896.6,997.9 899.6,982.8 932.9,976.7"/>
<polyline points="745.1,858.6 760.3,857.1 778.5,908.6 814.8,905.6 826.9,885.9 826.9,872.3 836.0,872.3 836.0,931.3 822.4,952.5 860.2,949.5 861.7,979.8 842.0,979.8"/>
<polyline points="866.3,997.9 869.3,1031.2 857.2,1043.4 875.4,1082.7 923.8,1094.8 1008.0,1100.9"/>
<polyline points="923.8,1094.8 984.4,1010.0 1008.0,988.9"/>
<polyline points="932.9,976.7 984.4,1010.0"/>
<polyline points="957.1,792.0 963.2,831.4 960.2,867.7 975.3,888.9 978.3,922.2 1002.6,907.1 1008.0,882.9"/>
<polyline points="851.1,825.3 887.5,820.8 902.6,870.7 914.7,876.8 932.9,976.7"/>
<polyline points="948.4,792.0 963.6,831.3 960.5,873.7 972.6,885.8 978.7,922.1 999.9,910.0 1007.4,922.1 1001.4,949.4 1009.0,990.2 981.7,1012.9 924.2,1094.7"/>
<polyline points="999.9,901.0 1033.2,870.7 1045.3,848.0 1093.7,876.7 1101.3,907.0 1090.7,952.4 1087.7,991.8 1102.8,1025.1 1133.1,1034.1 1114.9,1079.5 1151.2,1082.6"/>
<polyline points="1060.4,855.6 1108.8,816.2 1111.9,801.1 1151.2,807.1"/>
<polyline points="1101.3,907.0 1151.2,916.1"/>
<polyline points="1090.7,950.9 1057.4,955.4 1009.0,990.2 1063.4,1046.2 1075.5,1094.7 1069.5,1103.7 924.2,1094.7 900.0,1088.6"/>
<polyline points="900.0,982.7 930.3,978.1 981.7,1012.9"/>
<polyline points="915.1,907.0 930.3,978.1"/>
<polyline points="1090.7,950.9 1151.2,970.6"/>
</g>
<text x="151" y="222" font-size="18.5" fill="#8d8d8d" letter-spacing="1.74" font-family="Liberation Sans">HOLLOWAY</text>
<text x="643" y="216" font-size="19.5" fill="#8d8d8d" letter-spacing="1.4" font-family="Liberation Sans">FINSBURY</text>
<text x="669.5" y="240" font-size="19.5" fill="#8d8d8d" letter-spacing="1.45" font-family="Liberation Sans">PARK</text>
<text x="859.6" y="201" font-size="21" fill="#5d6677" letter-spacing="1.2" font-family="Liberation Sans">BROWNSWOOD</text>
<text x="463.7" y="446" font-size="18.5" fill="#8d8d8d" letter-spacing="1.74" font-family="Liberation Sans">HOLLOWAY</text>
<text x="555" y="526" font-size="18.5" fill="#8d8d8d" letter-spacing="1.3" font-family="Liberation Sans">LOWER</text>
<text x="534" y="549.5" font-size="18.5" fill="#8d8d8d" letter-spacing="1.74" font-family="Liberation Sans">HOLLOWAY</text>
<text x="3" y="668" font-size="17.5" fill="#8d8d8d" letter-spacing="2.5" font-family="Liberation Sans">ENTISH</text>
<text x="4.5" y="692" font-size="17.5" fill="#8d8d8d" letter-spacing="1.95" font-family="Liberation Sans">TOWN</text>
<text x="4" y="937" font-size="27" fill="#7d7d7d" letter-spacing="0.5" font-family="Liberation Sans">Camden Town</text>
<text x="781" y="820" font-size="19" fill="#8d8d8d" letter-spacing="1.58" font-family="Liberation Sans">HIGHBURY</text>
<text x="918" y="909.5" font-size="19" fill="#8d8d8d" letter-spacing="1.5" font-family="Liberation Sans">CANONBURY</text>
<text x="529" y="1044" font-size="19.5" fill="#8d8d8d" letter-spacing="1.3" font-family="Liberation Sans">BARNSBURY</text>
<text x="834.6" y="1060" font-size="20" fill="#8d8d8d" letter-spacing="1.25" font-family="Liberation Sans">ISLINGTON</text>
<text x="1121" y="999" font-size="18.5" fill="#8d8d8d" letter-spacing="1.5" font-family="Liberation Sans">DE</text>
<text transform="translate(136.5,393.5) rotate(-74.3)" font-size="18.9" fill="#8a8a8a" font-family="Liberation Sans">Junction Rd</text>
<text transform="translate(433,110.4) rotate(58.7)" font-size="18.7" fill="#8a8a8a" font-family="Liberation Sans">Hornsey Rd</text>
<text transform="translate(399.1,744.5) rotate(-27.5)" font-size="19.6" fill="#8a8a8a" font-family="Liberation Sans">North Rd</text>
<text transform="translate(695,764.1) rotate(66.2)" font-size="19.6" fill="#8a8a8a" font-family="Liberation Sans">Liverpool Rd</text>
<text transform="translate(817.7,954.5) rotate(72.3)" font-size="20" fill="#8a8a8a" font-family="Liberation Sans">Upper St</text>
<text transform="translate(1024.9,1041) rotate(53.4)" font-size="18.6" fill="#8a8a8a" font-family="Liberation Sans">New North Rd</text>
<text transform="translate(364,930) rotate(74.3)" font-size="18.7" fill="#8a8a8a" font-family="Liberation Sans">York Way</text>
<g transform="translate(283,227)"><rect width="14" height="10" fill="#e23a48"/><path d="M3 3.5h8M3 6.5h8M5 2l3 3-3 3" stroke="#fff" stroke-width="1" fill="none"/></g>
<g transform="translate(296,227)"><circle cx="7" cy="5" r="4.5" fill="none" stroke="#f08a2c" stroke-width="2"/><rect x="0" y="4" width="14" height="2.2" fill="#3a55c8"/></g>
<g transform="translate(774,588)"><rect width="14" height="10" fill="#e23a48"/><path d="M3 3.5h8M3 6.5h8M5 2l3 3-3 3" stroke="#fff" stroke-width="1" fill="none"/></g>
<g transform="translate(575,886)"><circle cx="7" cy="5" r="4.5" fill="none" stroke="#f08a2c" stroke-width="2"/><rect x="0" y="4" width="14" height="2.2" fill="#3a55c8"/></g>
<g transform="translate(1025,720)"><circle cx="7" cy="5" r="4.5" fill="none" stroke="#f08a2c" stroke-width="2"/><rect x="0" y="4" width="14" height="2.2" fill="#3a55c8"/></g>
<g transform="translate(958,976)"><rect width="14" height="10" fill="#e23a48"/><path d="M3 3.5h8M3 6.5h8M5 2l3 3-3 3" stroke="#fff" stroke-width="1" fill="none"/></g>
</svg>
<svg class="a" style="left:0;top:0" width="1151" height="1136" viewBox="0 0 1151 1136">
<line x1="562" y1="244" x2="660.5" y2="569" stroke="#7d72b3" stroke-width="3" stroke-dasharray="6 4.5"/>
<line x1="828.5" y1="202.4" x2="660.5" y2="569" stroke="#7d72b3" stroke-width="3" stroke-dasharray="6 4.5"/>
<line x1="939" y1="272" x2="660.5" y2="569" stroke="#7d72b3" stroke-width="3" stroke-dasharray="6 4.5"/>
<line x1="377" y1="355.5" x2="660.5" y2="569" stroke="#7d72b3" stroke-width="3" stroke-dasharray="6 4.5"/>
<line x1="895.3" y1="915.6" x2="660.5" y2="569" stroke="#4d5290" stroke-width="3" stroke-dasharray="6 4.5"/>
<line x1="712" y1="310" x2="660.5" y2="569" stroke="#f6bb40" stroke-width="3" stroke-dasharray="6 4.5"/>
<line x1="461" y1="403" x2="660.5" y2="569" stroke="#f6bb40" stroke-width="3" stroke-dasharray="6 4.5"/>
<line x1="951.7" y1="475.5" x2="660.5" y2="569" stroke="#f6bb40" stroke-width="3" stroke-dasharray="6 4.5"/>
<line x1="970" y1="710.3" x2="660.5" y2="569" stroke="#f6bb40" stroke-width="3" stroke-dasharray="6 4.5"/>
<line x1="768.6" y1="815.6" x2="660.5" y2="569" stroke="#f6bb40" stroke-width="3" stroke-dasharray="6 4.5"/>
<line x1="533" y1="914.8" x2="660.5" y2="569" stroke="#f6bb40" stroke-width="3" stroke-dasharray="6 4.5"/>
<line x1="298.5" y1="459.8" x2="660.5" y2="569" stroke="#e5535e" stroke-width="3" stroke-dasharray="6 4.5"/>
<line x1="658.3" y1="488" x2="660.5" y2="569" stroke="#e5535e" stroke-width="3" stroke-dasharray="6 4.5"/>
<line x1="751" y1="658.7" x2="660.5" y2="569" stroke="#e5535e" stroke-width="3" stroke-dasharray="6 4.5"/>
<line x1="495.3" y1="719.6" x2="660.5" y2="569" stroke="#e5535e" stroke-width="3" stroke-dasharray="6 4.5"/>
<polygon points="549.1,477.2 604.3,441.7 654.3,548.2 670.8,518.6 679.7,543.2 714.7,492 747.3,512.4 745.5,569.1 687.6,565 701.2,601.2 732,598 734.4,637 704.4,671.9" fill="#f0b020" fill-opacity="0.65" stroke="#e9ac2a" stroke-width="1.3"/>
<circle cx="660.5" cy="569" r="6.2" fill="#363c42"/>
<g transform="translate(160,540) scale(1)"><path d="M6 0h22a6 6 0 0 1 6 6v19.5a6 6 0 0 1-6 6h-2l-9 12.5-9-12.5H6a6 6 0 0 1-6-6V6a6 6 0 0 1 6-6z" fill="#a9adb1"/><rect x="3.7" y="3.3" width="26.6" height="25" rx="4.5" fill="#e6e7e8"/><text x="17" y="22.3" text-anchor="middle" font-size="15" font-weight="bold" fill="#a0a4a8" font-family="Liberation Sans">GP</text></g>
<g transform="translate(631.4,991.4) scale(1)"><path d="M6 0h22a6 6 0 0 1 6 6v19.5a6 6 0 0 1-6 6h-2l-9 12.5-9-12.5H6a6 6 0 0 1-6-6V6a6 6 0 0 1 6-6z" fill="#a9adb1"/><rect x="3.7" y="3.3" width="26.6" height="25" rx="4.5" fill="#e6e7e8"/><text x="17" y="22.3" text-anchor="middle" font-size="15" font-weight="bold" fill="#a0a4a8" font-family="Liberation Sans">GP</text></g>
<g transform="translate(773,1036) scale(1)"><path d="M6 0h22a6 6 0 0 1 6 6v19.5a6 6 0 0 1-6 6h-2l-9 12.5-9-12.5H6a6 6 0 0 1-6-6V6a6 6 0 0 1 6-6z" fill="#a9adb1"/><rect x="3.7" y="3.3" width="26.6" height="25" rx="4.5" fill="#e6e7e8"/><text x="17" y="22.3" text-anchor="middle" font-size="15" font-weight="bold" fill="#a0a4a8" font-family="Liberation Sans">GP</text></g>
<g transform="translate(202,672) scale(0.75)"><path d="M6 0h22a6 6 0 0 1 6 6v19.5a6 6 0 0 1-6 6h-2l-9 12.5-9-12.5H6a6 6 0 0 1-6-6V6a6 6 0 0 1 6-6z" fill="#a9adb1"/><rect x="3.7" y="3.3" width="26.6" height="25" rx="4.5" fill="#e6e7e8"/><text x="17" y="22.3" text-anchor="middle" font-size="15" font-weight="bold" fill="#a0a4a8" font-family="Liberation Sans">GP</text></g>
<g transform="translate(545,200) scale(1.0)"><path d="M6 0h22a6 6 0 0 1 6 6v19.5a6 6 0 0 1-6 6h-2l-9 12.5-9-12.5H6a6 6 0 0 1-6-6V6a6 6 0 0 1 6-6z" fill="#6b5ea8"/><rect x="3.7" y="3.3" width="26.6" height="25" rx="4.5" fill="#dcd7ef"/><text x="17" y="22.3" text-anchor="middle" font-size="15" font-weight="bold" fill="#6b5ea8" font-family="Liberation Sans">GP</text></g>
<g transform="translate(811.5,158.4) scale(1.0)"><path d="M6 0h22a6 6 0 0 1 6 6v19.5a6 6 0 0 1-6 6h-2l-9 12.5-9-12.5H6a6 6 0 0 1-6-6V6a6 6 0 0 1 6-6z" fill="#6b5ea8"/><rect x="3.7" y="3.3" width="26.6" height="25" rx="4.5" fill="#dcd7ef"/><text x="17" y="22.3" text-anchor="middle" font-size="15" font-weight="bold" fill="#6b5ea8" font-family="Liberation Sans">GP</text></g>
<g transform="translate(922,228) scale(1.0)"><path d="M6 0h22a6 6 0 0 1 6 6v19.5a6 6 0 0 1-6 6h-2l-9 12.5-9-12.5H6a6 6 0 0 1-6-6V6a6 6 0 0 1 6-6z" fill="#6b5ea8"/><rect x="3.7" y="3.3" width="26.6" height="25" rx="4.5" fill="#dcd7ef"/><text x="17" y="22.3" text-anchor="middle" font-size="15" font-weight="bold" fill="#6b5ea8" font-family="Liberation Sans">GP</text></g>
<g transform="translate(360,311.5) scale(1.0)"><path d="M6 0h22a6 6 0 0 1 6 6v19.5a6 6 0 0 1-6 6h-2l-9 12.5-9-12.5H6a6 6 0 0 1-6-6V6a6 6 0 0 1 6-6z" fill="#6b5ea8"/><rect x="3.7" y="3.3" width="26.6" height="25" rx="4.5" fill="#dcd7ef"/><text x="17" y="22.3" text-anchor="middle" font-size="15" font-weight="bold" fill="#6b5ea8" font-family="Liberation Sans">GP</text></g>
<g transform="translate(878.3,871.6) scale(1.0)"><path d="M6 0h22a6 6 0 0 1 6 6v19.5a6 6 0 0 1-6 6h-2l-9 12.5-9-12.5H6a6 6 0 0 1-6-6V6a6 6 0 0 1 6-6z" fill="#6b5ea8"/><rect x="3.7" y="3.3" width="26.6" height="25" rx="4.5" fill="#dcd7ef"/><text x="17" y="22.3" text-anchor="middle" font-size="15" font-weight="bold" fill="#6b5ea8" font-family="Liberation Sans">GP</text></g>
<g transform="translate(695,266) scale(1.0)"><path d="M6 0h22a6 6 0 0 1 6 6v19.5a6 6 0 0 1-6 6h-2l-9 12.5-9-12.5H6a6 6 0 0 1-6-6V6a6 6 0 0 1 6-6z" fill="#f6b420"/><rect x="3.7" y="3.3" width="26.6" height="25" rx="4.5" fill="#fdf5e3"/><text x="17" y="22.3" text-anchor="middle" font-size="15" font-weight="bold" fill="#f0a81a" font-family="Liberation Sans">GP</text></g>
<g transform="translate(444,359) scale(1.0)"><path d="M6 0h22a6 6 0 0 1 6 6v19.5a6 6 0 0 1-6 6h-2l-9 12.5-9-12.5H6a6 6 0 0 1-6-6V6a6 6 0 0 1 6-6z" fill="#f6b420"/><rect x="3.7" y="3.3" width="26.6" height="25" rx="4.5" fill="#fdf5e3"/><text x="17" y="22.3" text-anchor="middle" font-size="15" font-weight="bold" fill="#f0a81a" font-family="Liberation Sans">GP</text></g>
<g transform="translate(934.7,431.5) scale(1.0)"><path d="M6 0h22a6 6 0 0 1 6 6v19.5a6 6 0 0 1-6 6h-2l-9 12.5-9-12.5H6a6 6 0 0 1-6-6V6a6 6 0 0 1 6-6z" fill="#f6b420"/><rect x="3.7" y="3.3" width="26.6" height="25" rx="4.5" fill="#fdf5e3"/><text x="17" y="22.3" text-anchor="middle" font-size="15" font-weight="bold" fill="#f0a81a" font-family="Liberation Sans">GP</text></g>
<g transform="translate(953,666.3) scale(1.0)"><path d="M6 0h22a6 6 0 0 1 6 6v19.5a6 6 0 0 1-6 6h-2l-9 12.5-9-12.5H6a6 6 0 0 1-6-6V6a6 6 0 0 1 6-6z" fill="#f6b420"/><rect x="3.7" y="3.3" width="26.6" height="25" rx="4.5" fill="#fdf5e3"/><text x="17" y="22.3" text-anchor="middle" font-size="15" font-weight="bold" fill="#f0a81a" font-family="Liberation Sans">GP</text></g>
<g transform="translate(751.6,771.6) scale(1.0)"><path d="M6 0h22a6 6 0 0 1 6 6v19.5a6 6 0 0 1-6 6h-2l-9 12.5-9-12.5H6a6 6 0 0 1-6-6V6a6 6 0 0 1 6-6z" fill="#f6b420"/><rect x="3.7" y="3.3" width="26.6" height="25" rx="4.5" fill="#fdf5e3"/><text x="17" y="22.3" text-anchor="middle" font-size="15" font-weight="bold" fill="#f0a81a" font-family="Liberation Sans">GP</text></g>
<g transform="translate(516,870.8) scale(1.0)"><path d="M6 0h22a6 6 0 0 1 6 6v19.5a6 6 0 0 1-6 6h-2l-9 12.5-9-12.5H6a6 6 0 0 1-6-6V6a6 6 0 0 1 6-6z" fill="#f6b420"/><rect x="3.7" y="3.3" width="26.6" height="25" rx="4.5" fill="#fdf5e3"/><text x="17" y="22.3" text-anchor="middle" font-size="15" font-weight="bold" fill="#f0a81a" font-family="Liberation Sans">GP</text></g>
<g transform="translate(281.5,415.8) scale(1.0)"><path d="M6 0h22a6 6 0 0 1 6 6v19.5a6 6 0 0 1-6 6h-2l-9 12.5-9-12.5H6a6 6 0 0 1-6-6V6a6 6 0 0 1 6-6z" fill="#e23a48"/><rect x="3.7" y="3.3" width="26.6" height="25" rx="4.5" fill="#f6e4e4"/><text x="17" y="22.3" text-anchor="middle" font-size="15" font-weight="bold" fill="#e23a48" font-family="Liberation Sans">GP</text></g>
<g transform="translate(641.3,444) scale(1.0)"><path d="M6 0h22a6 6 0 0 1 6 6v19.5a6 6 0 0 1-6 6h-2l-9 12.5-9-12.5H6a6 6 0 0 1-6-6V6a6 6 0 0 1 6-6z" fill="#e23a48"/><rect x="3.7" y="3.3" width="26.6" height="25" rx="4.5" fill="#f6e4e4"/><text x="17" y="22.3" text-anchor="middle" font-size="15" font-weight="bold" fill="#e23a48" font-family="Liberation Sans">GP</text></g>
<g transform="translate(734,614.7) scale(1.0)"><path d="M6 0h22a6 6 0 0 1 6 6v19.5a6 6 0 0 1-6 6h-2l-9 12.5-9-12.5H6a6 6 0 0 1-6-6V6a6 6 0 0 1 6-6z" fill="#e23a48"/><rect x="3.7" y="3.3" width="26.6" height="25" rx="4.5" fill="#f6e4e4"/><text x="17" y="22.3" text-anchor="middle" font-size="15" font-weight="bold" fill="#e23a48" font-family="Liberation Sans">GP</text></g>
<g transform="translate(478.3,675.6) scale(1.0)"><path d="M6 0h22a6 6 0 0 1 6 6v19.5a6 6 0 0 1-6 6h-2l-9 12.5-9-12.5H6a6 6 0 0 1-6-6V6a6 6 0 0 1 6-6z" fill="#e23a48"/><rect x="3.7" y="3.3" width="26.6" height="25" rx="4.5" fill="#f6e4e4"/><text x="17" y="22.3" text-anchor="middle" font-size="15" font-weight="bold" fill="#e23a48" font-family="Liberation Sans">GP</text></g>
</svg>
<div id="hdr">
<div class="logo">Sid<span>M</span> Health</div>
<div class="sep" style="left:799px"></div>
<div class="nl" style="left:816px">PCN Profiles</div>
<div class="dd" style="left:805px">Local<br>Demographics</div>
<svg class="a" style="left:933px;top:56px" width="14" height="10"><polyline points="2,2 7.0,8 12,2" fill="none" stroke="#fff" stroke-width="2"/></svg>
<div class="sep" style="left:963px"></div>
<div class="nl" style="left:980px">Scenario Planning</div>
<div class="dd" style="left:969px">GPCAL<br>Basemap</div>
<svg class="a" style="left:1097px;top:56px" width="14" height="10"><polyline points="2,2 7.0,8 12,2" fill="none" stroke="#fff" stroke-width="2"/></svg>
<div class="sep" style="left:1127px"></div>
<div class="nl" style="left:1144px">Population</div>
<div class="dd" style="left:1133px">GLA 2016<br>Trajectory</div>
<svg class="a" style="left:1261px;top:56px" width="14" height="10"><polyline points="2,2 7.0,8 12,2" fill="none" stroke="#fff" stroke-width="2"/></svg>
<div class="sep" style="left:1290px"></div>
<div class="nl" style="left:1307px">Housing</div>
<div class="dd" style="left:1296px">Enable<br>bou_selection</div>
<svg class="a" style="left:1424px;top:56px" width="14" height="10"><polyline points="2,2 7.0,8 12,2" fill="none" stroke="#fff" stroke-width="2"/></svg>
<div class="sep" style="left:1454px"></div>
<div class="nl" style="left:1471px">Bounderies</div>
<div class="dd" style="left:1460px">Upload<br>housing data</div>
<svg class="a" style="left:1588px;top:56px" width="14" height="10"><polyline points="2,2 7.0,8 12,2" fill="none" stroke="#fff" stroke-width="2"/></svg>
<div class="sep" style="left:1618px"></div>
<div class="nl" style="left:1635px">Housing</div>
<div class="dd" style="left:1624px">Housing<br>Statistics</div>
<svg class="a" style="left:1752px;top:56px" width="14" height="10"><polyline points="2,2 7.0,8 12,2" fill="none" stroke="#fff" stroke-width="2"/></svg>
<div class="sep" style="left:1781px"></div>
<div class="nl" style="left:1796px">Log Out</div>
<svg class="a" style="left:1873px;top:15px" width="18" height="18"><path d="M7 2H2v14h5" fill="none" stroke="#e6e9eb" stroke-width="1.6"/><path d="M6 9h10M12 5l4 4-4 4" fill="none" stroke="#e6e9eb" stroke-width="1.6"/></svg>
<div class="dd" style="left:1786px;width:125px;font-size:15px;line-height:20px;padding-top:6px">Log<br>issue</div>
<svg class="a" style="left:1888px;top:57px" width="14" height="10"><polyline points="2,2 7.0,8 12,2" fill="none" stroke="#fff" stroke-width="2"/></svg>
</div>
<div id="panel"></div>
<svg class="a" style="left:1151px;top:104px" width="769" height="1032" viewBox="1151 104 769 1032"><g font-family="Liberation Sans" fill="#4a5157"><text x="1651" y="143" font-size="19" letter-spacing="4">UPPER</text><text x="1637" y="180" font-size="19" letter-spacing="4">CLAPTON</text><text transform="translate(1506,190) rotate(-17)" font-size="19">Cazenove Rd</text><text transform="translate(1297,135) rotate(-20)" font-size="19">Manor Rd</text><text x="1483" y="318" font-size="19" letter-spacing="4">WEST</text><text x="1330" y="420" font-size="19" letter-spacing="4">STOKE</text></g><g fill="none" stroke="#4a5157" stroke-width="1.3"><polyline points="1151,400 1220,330 1290,390 1330,300"/><polyline points="1151,760 1200,700 1260,720"/><polyline points="1440,150 1520,230 1600,200"/></g></svg>
<div class="t" style="left:1172px;top:128px;font-size:22px;line-height:28px;color:#f0f2f3">PCN Profile <span style="font-size:18px;position:relative;top:-2px">&#8226;</span> <b style="color:#fff;font-size:25px;margin-left:5px">Health Outcomes Summary</b></div>
<svg class="a" style="left:1173px;top:181px" width="28" height="22"><g fill="none" stroke="#e2e6e8" stroke-width="1.5"><rect x="9" y="1" width="9" height="6" rx="1.5"/><rect x="1" y="14" width="9" height="6" rx="1.5"/><rect x="17" y="14" width="9" height="6" rx="1.5"/><path d="M13.5 7v4M5.5 14v-3h16v3"/></g></svg>
<div class="t" style="left:1208px;top:185px;font-size:17.3px;line-height:20px;color:#e4e7e9">Geog / catchment</div>
<div class="box" style="left:1209px;top:210px;width:172px;height:39px"></div>
<div class="t" style="left:1224px;top:222px;font-size:14px;line-height:17px;color:#fff">CCG view</div>
<svg class="a" style="left:1353px;top:226px" width="13" height="10"><polyline points="2,2 6.5,8 11,2" fill="none" stroke="#fff" stroke-width="2"/></svg>
<svg class="a" style="left:1414px;top:181px" width="28" height="22"><g fill="none" stroke="#e2e6e8" stroke-width="1.5"><rect x="9" y="1" width="9" height="6" rx="1.5"/><rect x="1" y="14" width="9" height="6" rx="1.5"/><rect x="17" y="14" width="9" height="6" rx="1.5"/><path d="M13.5 7v4M5.5 14v-3h16v3"/></g></svg>
<div class="t" style="left:1449px;top:185px;font-size:17px;line-height:20px;color:#e4e7e9">PCN name :</div>
<div class="box" style="left:1450px;top:210px;width:206px;height:39px"></div>
<div class="t" style="left:1465px;top:222px;font-size:14.5px;line-height:17px;color:#fff">Hackney Downs PCN</div>
<svg class="a" style="left:1628px;top:226px" width="13" height="10"><polyline points="2,2 6.5,8 11,2" fill="none" stroke="#fff" stroke-width="2"/></svg>
<svg class="a" style="left:1414px;top:258px" width="30" height="21"><g fill="none" stroke="#e2e6e8" stroke-width="1.5"><rect x="1" y="1" width="26" height="17" rx="2"/><rect x="5" y="5" width="6" height="8"/><path d="M14 6h9M14 9.5h9M14 13h9"/></g></svg>
<div class="t" style="left:1450px;top:261px;font-size:17px;line-height:20px;color:#e4e7e9">PCN code :</div>
<div class="t" style="left:1450px;top:286px;font-size:14px;line-height:17px;color:#fff">07T</div>
<svg class="a" style="left:1676px;top:176px" width="24" height="24"><g fill="none" stroke="#e2e6e8" stroke-width="1.4"><path d="M6 7a6 6 0 0 1 12 0v2H6z"/><path d="M12 4v4M10 6h4"/><path d="M7 9c0 4 2 6 5 6s5-2 5-6"/><path d="M1.5 22c1-4 4-6 7-7l3.5 4 3.5-4c3 1 6 3 7 7"/></g></svg>
<div class="t" style="left:1706px;top:180px;font-size:17px;line-height:20px;color:#e4e7e9">GP list:</div>
<div class="a" style="left:1678px;top:209px;width:213px;height:97px;background:#43494e"></div>
<div class="a" style="left:1881px;top:217px;width:4px;height:41px;background:#8d9aa1;border-radius:2px"></div>
<div class="t" style="left:1687px;top:227px;font-size:17.5px;line-height:20px;color:#fff">Healy Medical Centre</div>
<div class="t" style="left:1687px;top:263px;font-size:17.5px;line-height:20px;color:#fff">The Nightingale Practice</div>
<div class="box" style="left:1172px;top:319px;width:39px;height:39px"></div>
<div class="t" style="left:1187px;top:328px;font-size:20px;line-height:22px;color:#fff">i</div>
<div class="box" style="left:1213px;top:319px;width:39px;height:39px"></div>
<svg class="a" style="left:1224px;top:329px" width="18" height="20"><path d="M2 1h14v17l-7-6-7 6z" fill="none" stroke="#fff" stroke-width="1.5"/></svg>
<div class="box" style="left:1254px;top:319px;width:102px;height:39px"></div>
<div class="t" style="left:1267px;top:331px;font-size:14.5px;line-height:17px;color:#fff">2021</div>
<svg class="a" style="left:1335px;top:335px" width="13" height="10"><polyline points="2,2 6.5,8 11,2" fill="none" stroke="#fff" stroke-width="2"/></svg>
<div class="box" style="left:1358px;top:319px;width:355px;height:39px"></div>
<div class="t" style="left:1376px;top:331px;font-size:14.5px;line-height:17px;color:#fff">Life expectancy at birth</div>
<svg class="a" style="left:1687px;top:335px" width="13" height="10"><polyline points="2,2 6.5,8 11,2" fill="none" stroke="#fff" stroke-width="2"/></svg>
<div class="box" style="left:1715px;top:319px;width:176px;height:39px"></div>
<div class="t" style="left:1725px;top:331px;font-size:14.5px;line-height:17px;color:#fff">Benchmark: ENG</div>
<svg class="a" style="left:1871px;top:335px" width="13" height="10"><polyline points="2,2 6.5,8 11,2" fill="none" stroke="#fff" stroke-width="2"/></svg>
<svg class="a" style="left:1175px;top:372px" width="24" height="29" viewBox="0 0 24 29"><g fill="none" stroke="#e2e6e8" stroke-width="1.5"><rect x="1.5" y="4" width="21" height="23.5" rx="2.5"/><rect x="4.5" y="7" width="15" height="17.5"/><path d="M8 5V2.5h3a1.5 1.5 0 0 1 3 0h2V5"/><path d="M7 11h10M7 14h10M7 17h10M7 20h10"/></g></svg>
<div class="t" style="left:1209px;top:378px;font-size:18.3px;line-height:21px;color:#f4f5f6">Determinants of Health Outcomes</div>
<svg class="a" style="left:1735px;top:375px" width="18" height="3"><line x1="0" y1="1.5" x2="18" y2="1.5" stroke="#ffffff" stroke-width="2" stroke-dasharray="3 1.7"/></svg>
<div class="t" style="left:1730px;top:387px;width:28px;text-align:center;font-size:13px;line-height:15px;color:#d9dde0">PCN</div>
<svg class="a" style="left:1777px;top:375px" width="18" height="3"><line x1="0" y1="1.5" x2="18" y2="1.5" stroke="#f3c23a" stroke-width="2" stroke-dasharray="3 1.7"/></svg>
<div class="t" style="left:1772px;top:387px;width:28px;text-align:center;font-size:13px;line-height:15px;color:#d9dde0">CCG</div>
<svg class="a" style="left:1823px;top:375px" width="18" height="3"><line x1="0" y1="1.5" x2="18" y2="1.5" stroke="#e8505a" stroke-width="2" stroke-dasharray="3 1.7"/></svg>
<div class="t" style="left:1818px;top:387px;width:28px;text-align:center;font-size:13px;line-height:15px;color:#d9dde0">STP</div>
<svg class="a" style="left:1864px;top:375px" width="18" height="3"><line x1="0" y1="1.5" x2="18" y2="1.5" stroke="#3ee0cf" stroke-width="2" stroke-dasharray="3 1.7"/></svg>
<div class="t" style="left:1859px;top:387px;width:28px;text-align:center;font-size:13px;line-height:15px;color:#d9dde0">ENG</div>
<div class="card" style="left:1172px;top:417px;width:350px;height:321px"></div>
<div class="a" style="left:1172px;top:417px;width:350px;height:30px;background:#3c4348"></div>
<div class="t" style="left:1179px;top:422px;font-size:16.2px;line-height:20px;color:#fff">Level of capacity</div>
<svg class="a" style="left:1494px;top:423px" width="18" height="18"><g fill="none" stroke="#fff" stroke-width="1.6"><path d="M10 1.5h6.5V8M16.5 1.5L10.5 7.5M8 16.5H1.5V10M1.5 16.5L7.5 10.5"/></g></svg>
<div class="t" style="left:1184px;top:459px;font-size:12.5px;line-height:15px;color:#c5cbcf;font-style:italic">% area</div>
<div class="t" style="left:1180px;top:715px;font-size:12.5px;line-height:15px;color:#c5cbcf;font-style:italic">Low to high</div>
<svg class="a" style="left:1172px;top:417px" width="350" height="321"><line x1="59" y1="73" x2="59" y2="263" stroke="#aab2b7" stroke-width="1.5"/><line x1="59" y1="263" x2="337" y2="263" stroke="#aab2b7" stroke-width="1.5"/><line x1="59" y1="89" x2="65" y2="89" stroke="#aab2b7" stroke-width="1.2"/><text x="53" y="94" text-anchor="end" font-size="14.5" font-weight="bold" fill="#f2f4f5" font-family="Liberation Sans">25%</text><line x1="59" y1="124" x2="65" y2="124" stroke="#aab2b7" stroke-width="1.2"/><text x="53" y="129" text-anchor="end" font-size="14.5" font-weight="bold" fill="#f2f4f5" font-family="Liberation Sans">20%</text><line x1="59" y1="159" x2="65" y2="159" stroke="#aab2b7" stroke-width="1.2"/><text x="53" y="164" text-anchor="end" font-size="14.5" font-weight="bold" fill="#f2f4f5" font-family="Liberation Sans">15%</text><line x1="59" y1="194" x2="65" y2="194" stroke="#aab2b7" stroke-width="1.2"/><text x="53" y="199" text-anchor="end" font-size="14.5" font-weight="bold" fill="#f2f4f5" font-family="Liberation Sans">10%</text><line x1="59" y1="229" x2="65" y2="229" stroke="#aab2b7" stroke-width="1.2"/><text x="53" y="234" text-anchor="end" font-size="14.5" font-weight="bold" fill="#f2f4f5" font-family="Liberation Sans">5%</text><rect x="90" y="102" width="26" height="161" fill="#e03a46"/><rect x="141" y="182" width="25" height="81" fill="#e8956a"/><rect x="189" y="140" width="26" height="123" fill="#f0b429"/><rect x="240" y="199" width="25" height="64" fill="#b58cbf"/><rect x="289" y="168" width="25" height="95" fill="#6a5f9e"/><line x1="61" y1="159" x2="329" y2="159" stroke="#fff" stroke-width="1.6" stroke-dasharray="4 3"/><polyline points="103.59999999999991,110.70000000000005 152.70000000000005,213.70000000000005 203,175 251.5,218 302.4000000000001,178.60000000000002" fill="none" stroke="#fff" stroke-width="1.6" stroke-dasharray="3 3"/><circle cx="103.59999999999991" cy="110.70000000000005" r="4.2" fill="#eef0f1"/><circle cx="152.70000000000005" cy="213.70000000000005" r="4.2" fill="#eef0f1"/><circle cx="203" cy="175" r="4.2" fill="#eef0f1"/><circle cx="251.5" cy="218" r="4.2" fill="#eef0f1"/><circle cx="302.4000000000001" cy="178.60000000000002" r="4.2" fill="#eef0f1"/><text x="78" y="280" text-anchor="middle" font-size="14.5" fill="#f2f4f5" font-family="Liberation Sans">1</text><text x="131" y="280" text-anchor="middle" font-size="14.5" fill="#f2f4f5" font-family="Liberation Sans">2</text><text x="189" y="280" text-anchor="middle" font-size="14.5" fill="#f2f4f5" font-family="Liberation Sans">3</text><text x="247" y="280" text-anchor="middle" font-size="14.5" fill="#f2f4f5" font-family="Liberation Sans">4</text><text x="300" y="280" text-anchor="middle" font-size="14.5" fill="#f2f4f5" font-family="Liberation Sans">5</text></svg>
<div class="card" style="left:1542px;top:417px;width:350px;height:321px"></div>
<div class="a" style="left:1542px;top:417px;width:350px;height:30px;background:#3c4348"></div>
<div class="t" style="left:1553px;top:422px;font-size:16.2px;line-height:20px;color:#fff">Capacity above average</div>
<svg class="a" style="left:1864px;top:423px" width="18" height="18"><g fill="none" stroke="#fff" stroke-width="1.6"><path d="M10 1.5h6.5V8M16.5 1.5L10.5 7.5M8 16.5H1.5V10M1.5 16.5L7.5 10.5"/></g></svg>
<div class="t" style="left:1554px;top:456px;font-size:12.5px;line-height:15px;color:#c5cbcf;font-style:italic">Parameter: Staff Capacity</div>
<div class="t" style="left:1616px;top:498px;width:200px;text-align:center;font-size:13px;line-height:15px;color:#f2f4f5">Base year (2020)</div>
<div class="t" style="left:1616px;top:580px;width:200px;text-align:center;font-size:13px;line-height:15px;color:#f2f4f5">Selected year</div>
<div class="a" style="left:1582px;top:524px;width:182px;height:32px;background:#52d8b8"></div>
<div class="a" style="left:1764px;top:524px;width:84px;height:32px;background:#f07b8e"></div>
<div class="a" style="left:1763px;top:515px;width:2px;height:48px;background:#fff"></div>
<div class="t" style="left:1540px;top:532px;width:35px;text-align:right;font-size:13px;line-height:15px;color:#f2f4f5">91%</div>
<div class="t" style="left:1854px;top:532px;font-size:13px;line-height:15px;color:#f2f4f5">9%</div>
<div class="a" style="left:1582px;top:604px;width:220px;height:32px;background:#52d8b8"></div>
<div class="a" style="left:1802px;top:604px;width:46px;height:32px;background:#f07b8e"></div>
<div class="a" style="left:1801px;top:595px;width:2px;height:48px;background:#fff"></div>
<div class="t" style="left:1540px;top:612px;width:35px;text-align:right;font-size:13px;line-height:15px;color:#f2f4f5">88%</div>
<div class="t" style="left:1854px;top:612px;font-size:13px;line-height:15px;color:#f2f4f5">12%</div>
<div class="a" style="left:1558px;top:708px;width:16px;height:12px;background:#52d8b8"></div>
<div class="t" style="left:1581px;top:706px;font-size:12.5px;line-height:15px;color:#c5cbcf;font-style:italic">% Above average</div>
<div class="a" style="left:1692px;top:708px;width:16px;height:12px;background:#f07b8e"></div>
<div class="t" style="left:1715px;top:706px;font-size:12.5px;line-height:15px;color:#c5cbcf;font-style:italic">% Below average</div>
<div class="a" style="left:1899px;top:417px;width:21px;height:675px;background:#474e53"></div>
<div class="a" style="left:1904px;top:426px;width:12px;height:350px;background:#e9ecee;border-radius:6px"></div>
<div class="card" style="left:1173px;top:755px;width:348px;height:330px"></div>
<div class="a" style="left:1173px;top:755px;width:348px;height:31px;background:#3c4348"></div>
<div class="t" style="left:1187px;top:761px;font-size:17px;line-height:20px;color:#fff">Select option</div>
<svg class="a" style="left:1492px;top:762px" width="18" height="18"><g fill="none" stroke="#fff" stroke-width="1.6"><path d="M10 1.5h6.5V8M16.5 1.5L10.5 7.5M8 16.5H1.5V10M1.5 16.5L7.5 10.5"/></g></svg>
<div class="t" style="left:1187px;top:797px;font-size:12.5px;line-height:15px;color:#c5cbcf;font-style:italic">Access</div>
<div class="cb" style="left:1187px;top:836.0px;"></div>
<div class="cl" style="left:1215px;top:836.0px">Walking</div>
<div class="cb" style="left:1187px;top:870.7px;"></div>
<div class="cl" style="left:1215px;top:870.7px">Car</div>
<div class="cb" style="left:1187px;top:905.4px;"></div>
<div class="cl" style="left:1215px;top:905.4px">Public Transport</div>
<div class="cb" style="left:1187px;top:940.1px;"></div>
<div class="cl" style="left:1215px;top:940.1px">All</div>
<div class="t" style="left:1345px;top:797px;font-size:12.5px;line-height:15px;color:#c5cbcf;font-style:italic">Activity</div>
<div class="cb" style="left:1345px;top:836.0px;"></div>
<div class="cl" style="left:1373px;top:836.0px">Face to face/GP</div>
<div class="cb" style="left:1345px;top:870.7px;"></div>
<div class="cl" style="left:1373px;top:870.7px">Remote/GP</div>
<div class="cb" style="left:1345px;top:905.4px;"></div>
<div class="cl" style="left:1373px;top:905.4px">Face to Face/Other</div>
<div class="cb" style="left:1345px;top:940.1px;"></div>
<div class="cl" style="left:1373px;top:940.1px">Remote/Other</div>
<div class="cb" style="left:1345px;top:974.8px;"></div>
<div class="cl" style="left:1373px;top:974.8px">All</div>
<div class="card" style="left:1543px;top:755px;width:350px;height:330px"></div>
<div class="a" style="left:1543px;top:755px;width:350px;height:31px;background:#3c4348"></div>
<div class="t" style="left:1557px;top:761px;font-size:17px;line-height:20px;color:#fff">Select option</div>
<svg class="a" style="left:1864px;top:762px" width="18" height="18"><g fill="none" stroke="#fff" stroke-width="1.6"><path d="M10 1.5h6.5V8M16.5 1.5L10.5 7.5M8 16.5H1.5V10M1.5 16.5L7.5 10.5"/></g></svg>
<div class="t" style="left:1558px;top:797px;font-size:12.5px;line-height:15px;color:#c5cbcf;font-style:italic">Workforce</div>
<div class="cb" style="left:1558px;top:836.0px;background:#7d8c94;"></div>
<div class="cl" style="left:1586px;top:836.0px">GP</div>
<div class="cb" style="left:1558px;top:870.7px;background:#7d8c94;"></div>
<div class="cl" style="left:1586px;top:870.7px">Nurse</div>
<div class="cb" style="left:1558px;top:905.4px;"></div>
<div class="cl" style="left:1586px;top:905.4px">Admin</div>
<div class="cb" style="left:1558px;top:940.1px;"></div>
<div class="cl" style="left:1586px;top:940.1px">DPE</div>
<div class="t" style="left:1716px;top:797px;font-size:12.5px;line-height:15px;color:#c5cbcf;font-style:italic">Space</div>
<div class="cb" style="left:1716px;top:836.0px;"></div>
<div class="cl" style="left:1744px;top:836.0px">Clinical rooms</div>
<div class="cb" style="left:1716px;top:870.7px;"></div>
<div class="cl" style="left:1744px;top:870.7px">Floor Area</div>
<div class="a" style="left:1151px;top:1030px;width:769px;height:62px;background:linear-gradient(rgba(67,74,79,0),rgba(67,74,79,0.85))"></div>
<div class="a" style="left:1151px;top:1092px;width:380px;height:44px;background:#ccd3d8"></div>
<svg class="a" style="left:1268px;top:1100px" width="21.6" height="26.1" viewBox="0 0 24 29"><g fill="none" stroke="#4a5258" stroke-width="1.5"><rect x="1.5" y="4" width="21" height="23.5" rx="2.5"/><rect x="4.5" y="7" width="15" height="17.5"/><path d="M8 5V2.5h3a1.5 1.5 0 0 1 3 0h2V5"/><path d="M7 11h10M7 14h10M7 17h10M7 20h10"/></g></svg>
<div class="t" style="left:1298px;top:1104px;font-size:16.5px;line-height:21px;color:#3f474d">DOH Outcomes</div>
<div class="a" style="left:1531px;top:1092px;width:389px;height:44px;background:#798a92"></div>
<div class="a" style="left:1531px;top:1092px;width:2px;height:44px;background:#4f595e"></div>
<div class="a" style="left:1596px;top:1092px;width:2px;height:44px;background:#4f595e"></div>
<div class="a" style="left:1661px;top:1092px;width:2px;height:44px;background:#4f595e"></div>
<div class="a" style="left:1726px;top:1092px;width:2px;height:44px;background:#4f595e"></div>
<div class="a" style="left:1790px;top:1092px;width:2px;height:44px;background:#4f595e"></div>
<div class="a" style="left:1855px;top:1092px;width:2px;height:44px;background:#4f595e"></div>
<svg class="a" style="left:1533px;top:1092px" width="387" height="44" viewBox="1533 1092 387 44"><g fill="none" stroke="#eef1f3" stroke-width="1.3" stroke-linejoin="round" stroke-linecap="round"><path d="M1565.5 1126v-11M1565.5 1119l-3.5-3M1565.5 1118l3.5-3M1556 1126.5h19"/><path d="M1560 1119c-4 0-6-3-5-6-2-2-1-6 2-7 0-3 3-5 6-4 2-2 6-2 7 1 3 0 5 3 4 6 2 2 1 6-2 7-1 2-3 3-5 3"/><rect x="1614" y="1104" width="26" height="15" rx="1"/><rect x="1616.5" y="1106.5" width="21" height="10"/><circle cx="1627" cy="1111.5" r="3.2"/><path d="M1621 1109v5M1633 1109v5M1620 1121v7h26v-15h-4"/><path d="M1630 1121c0 3 4 3 4 0"/><circle cx="1686.5" cy="1110" r="4"/><path d="M1679 1125c0-6 3-9 7.5-9 2 0 3 .5 4 1.5"/><circle cx="1699" cy="1109" r="5"/><path d="M1689 1126c0-7 4.5-10 10-10s10 3 10 10z"/><path d="M1757 1103h4v4c3 2 4 5 4 8v11h-12v-11c0-3 1-6 4-8z"/><path d="M1753 1116h12M1753 1121h12M1756.5 1103.5h5"/><path d="M1817 1109v-5h17v24h-17v-5"/><path d="M1824 1101l10 3v24l-10 2z"/><circle cx="1812" cy="1115.5" r="2.8"/><path d="M1815 1115.5h10M1820 1115.5v2M1822.5 1115.5v2"/><circle cx="1831" cy="1116" r=".6"/><circle cx="1894" cy="1102" r="2.5"/><path d="M1880 1126c-2-7-1-14 3-18 3-2 6-2 8 0l3 5M1886 1112v14M1891 1113c2 1 3 2 3 4v9"/></g></svg>
<div class="leg" style="top:776px"></div>
<svg class="a" style="left:47px;top:784px" width="27.0" height="35.0" viewBox="0 0 27 35"><path d="M4 0h19a4 4 0 0 1 4 4v18a4 4 0 0 1-4 4h-5l-4.5 8-4.5-8H4a4 4 0 0 1-4-4V4a4 4 0 0 1 4-4z" fill="#e23a48"/><rect x="3.7" y="3.3" width="19.6" height="19.4" rx="3" fill="#f5e3e3"/><text x="13.5" y="18.3" text-anchor="middle" font-size="12" font-weight="bold" fill="#e23a48" font-family="Liberation Sans">GP</text></svg>
<div class="legt" style="top:795px">% High</div>
<div class="leg" style="top:828px"></div>
<svg class="a" style="left:47px;top:836px" width="27.0" height="35.0" viewBox="0 0 27 35"><path d="M4 0h19a4 4 0 0 1 4 4v18a4 4 0 0 1-4 4h-5l-4.5 8-4.5-8H4a4 4 0 0 1-4-4V4a4 4 0 0 1 4-4z" fill="#f6b420"/><rect x="3.7" y="3.3" width="19.6" height="19.4" rx="3" fill="#fdf6e6"/><text x="13.5" y="18.3" text-anchor="middle" font-size="12" font-weight="bold" fill="#f0a81a" font-family="Liberation Sans">GP</text></svg>
<div class="legt" style="top:847px">% Medium</div>
<div class="leg" style="top:880px"></div>
<svg class="a" style="left:47px;top:888px" width="27.0" height="35.0" viewBox="0 0 27 35"><path d="M4 0h19a4 4 0 0 1 4 4v18a4 4 0 0 1-4 4h-5l-4.5 8-4.5-8H4a4 4 0 0 1-4-4V4a4 4 0 0 1 4-4z" fill="#6b5ea8"/><rect x="3.7" y="3.3" width="19.6" height="19.4" rx="3" fill="#ddd8ef"/><text x="13.5" y="18.3" text-anchor="middle" font-size="12" font-weight="bold" fill="#6b5ea8" font-family="Liberation Sans">GP</text></svg>
<div class="legt" style="top:899px">% Low</div>
<div class="leg" style="top:932px"></div>
<svg class="a" style="left:47px;top:940px" width="27.0" height="35.0" viewBox="0 0 27 35"><path d="M4 0h19a4 4 0 0 1 4 4v18a4 4 0 0 1-4 4h-5l-4.5 8-4.5-8H4a4 4 0 0 1-4-4V4a4 4 0 0 1 4-4z" fill="#a9adb1"/><rect x="3.7" y="3.3" width="19.6" height="19.4" rx="3" fill="#e9eaeb"/><text x="13.5" y="18.3" text-anchor="middle" font-size="12" font-weight="bold" fill="#a0a4a8" font-family="Liberation Sans">GP</text></svg>
<div class="legt" style="top:951px">None</div>
<div class="leg" style="top:984px"></div>
<div class="a" style="left:46px;top:996px;width:30px;height:27px;border-radius:9px;background:#f6ca6c;border:1.5px solid #f0b429"></div>
<div class="legt" style="top:1003px">Selected LSOA</div>
<div class="leg" style="top:1036px"></div>
<div class="a" style="left:46px;top:1048px;width:30px;height:27px;border-radius:9px;border:1.5px solid #f0b429"></div>
<div class="legt" style="top:1055px">LSOA boundary</div>
<div class="btn" style="left:34px;width:208px"></div>
<div class="btn" style="left:245px;width:157px"></div>
<div class="btn" style="left:406px;width:158px"></div>
<svg class="a" style="left:99px;top:1103px" width="24" height="20"><g fill="none" stroke="#fff" stroke-width="1.3"><path d="M3 1l2.5 4h-5z"/><rect x="0.8" y="8" width="4.5" height="4"/><circle cx="3" cy="16.5" r="2.3"/><path d="M9 3h14M9 10h14M9 17h14"/></g></svg>
<div class="t" style="left:134px;top:1105px;font-size:12.5px;line-height:16px;font-weight:bold;color:#fff">Legend</div>
<svg class="a" style="left:291px;top:1102px" width="17" height="24"><g fill="none" stroke="#fff" stroke-width="1.3"><path d="M2 1h13v17H2z"/><path d="M5 4v4M8 6v2M11 3v5M5 11h7M5 14h7M8.5 15v8M5.5 20l3 3 3-3"/></g></svg>
<div class="t" style="left:315px;top:1105px;font-size:12.5px;line-height:16px;font-weight:bold;color:#fff">Report</div>
<svg class="a" style="left:458px;top:1102px" width="24" height="24"><g fill="none" stroke="#fff" stroke-width="1.3" stroke-linejoin="round"><path d="M1 8l6-2 5 2 5-2 6 2-1.5 11-4.5-1.5-5 2-5-2-5 1.5z"/><path d="M7 6v12M17 6v12"/><circle cx="12" cy="4" r="2.3"/><path d="M12 6.3v16M9.5 19.5l2.5 2.5 2.5-2.5"/></g></svg>
<div class="t" style="left:487px;top:1105px;font-size:12.5px;line-height:16px;font-weight:bold;color:#fff">Map</div>
<div class="a" style="left:34px;top:171px;width:238px;height:41px;background:#fff;border:1.8px solid #8c8c8c"></div>
<div class="a" style="left:34px;top:225px;width:238px;height:40px;background:#fff;border:1.8px solid #8c8c8c"></div>
<div class="a" style="left:73px;top:225px;width:2px;height:40px;background:#8c8c8c"></div>
<div class="a" style="left:113px;top:225px;width:2px;height:40px;background:#8c8c8c"></div>
<div class="a" style="left:152px;top:225px;width:2px;height:40px;background:#8c8c8c"></div>
<div class="a" style="left:192px;top:225px;width:2px;height:40px;background:#8c8c8c"></div>
<div class="a" style="left:231px;top:225px;width:2px;height:40px;background:#8c8c8c"></div>
<svg class="a" style="left:36px;top:227px" width="236" height="36"><g fill="none" stroke="#8a8a8a" stroke-width="1.4"><path d="M17 12v11M11.5 17.5h11"/><path d="M54 18h7"/><path d="M90 22v-9a1.5 1.5 0 0 1 3 0v7M93 20v-10a1.5 1.5 0 0 1 3 0v10M96 20v-10a1.5 1.5 0 0 1 3 0v10M99 20v-8a1.5 1.5 0 0 1 3 0v9c0 5-3 8-6 8s-6-2-6-6"/><circle cx="136" cy="18" r="9.5"/><path d="M163 10l11 7 11-8v14l-15 3z"/><rect x="204" y="10" width="17" height="17"/></g></svg>
</body></html>
